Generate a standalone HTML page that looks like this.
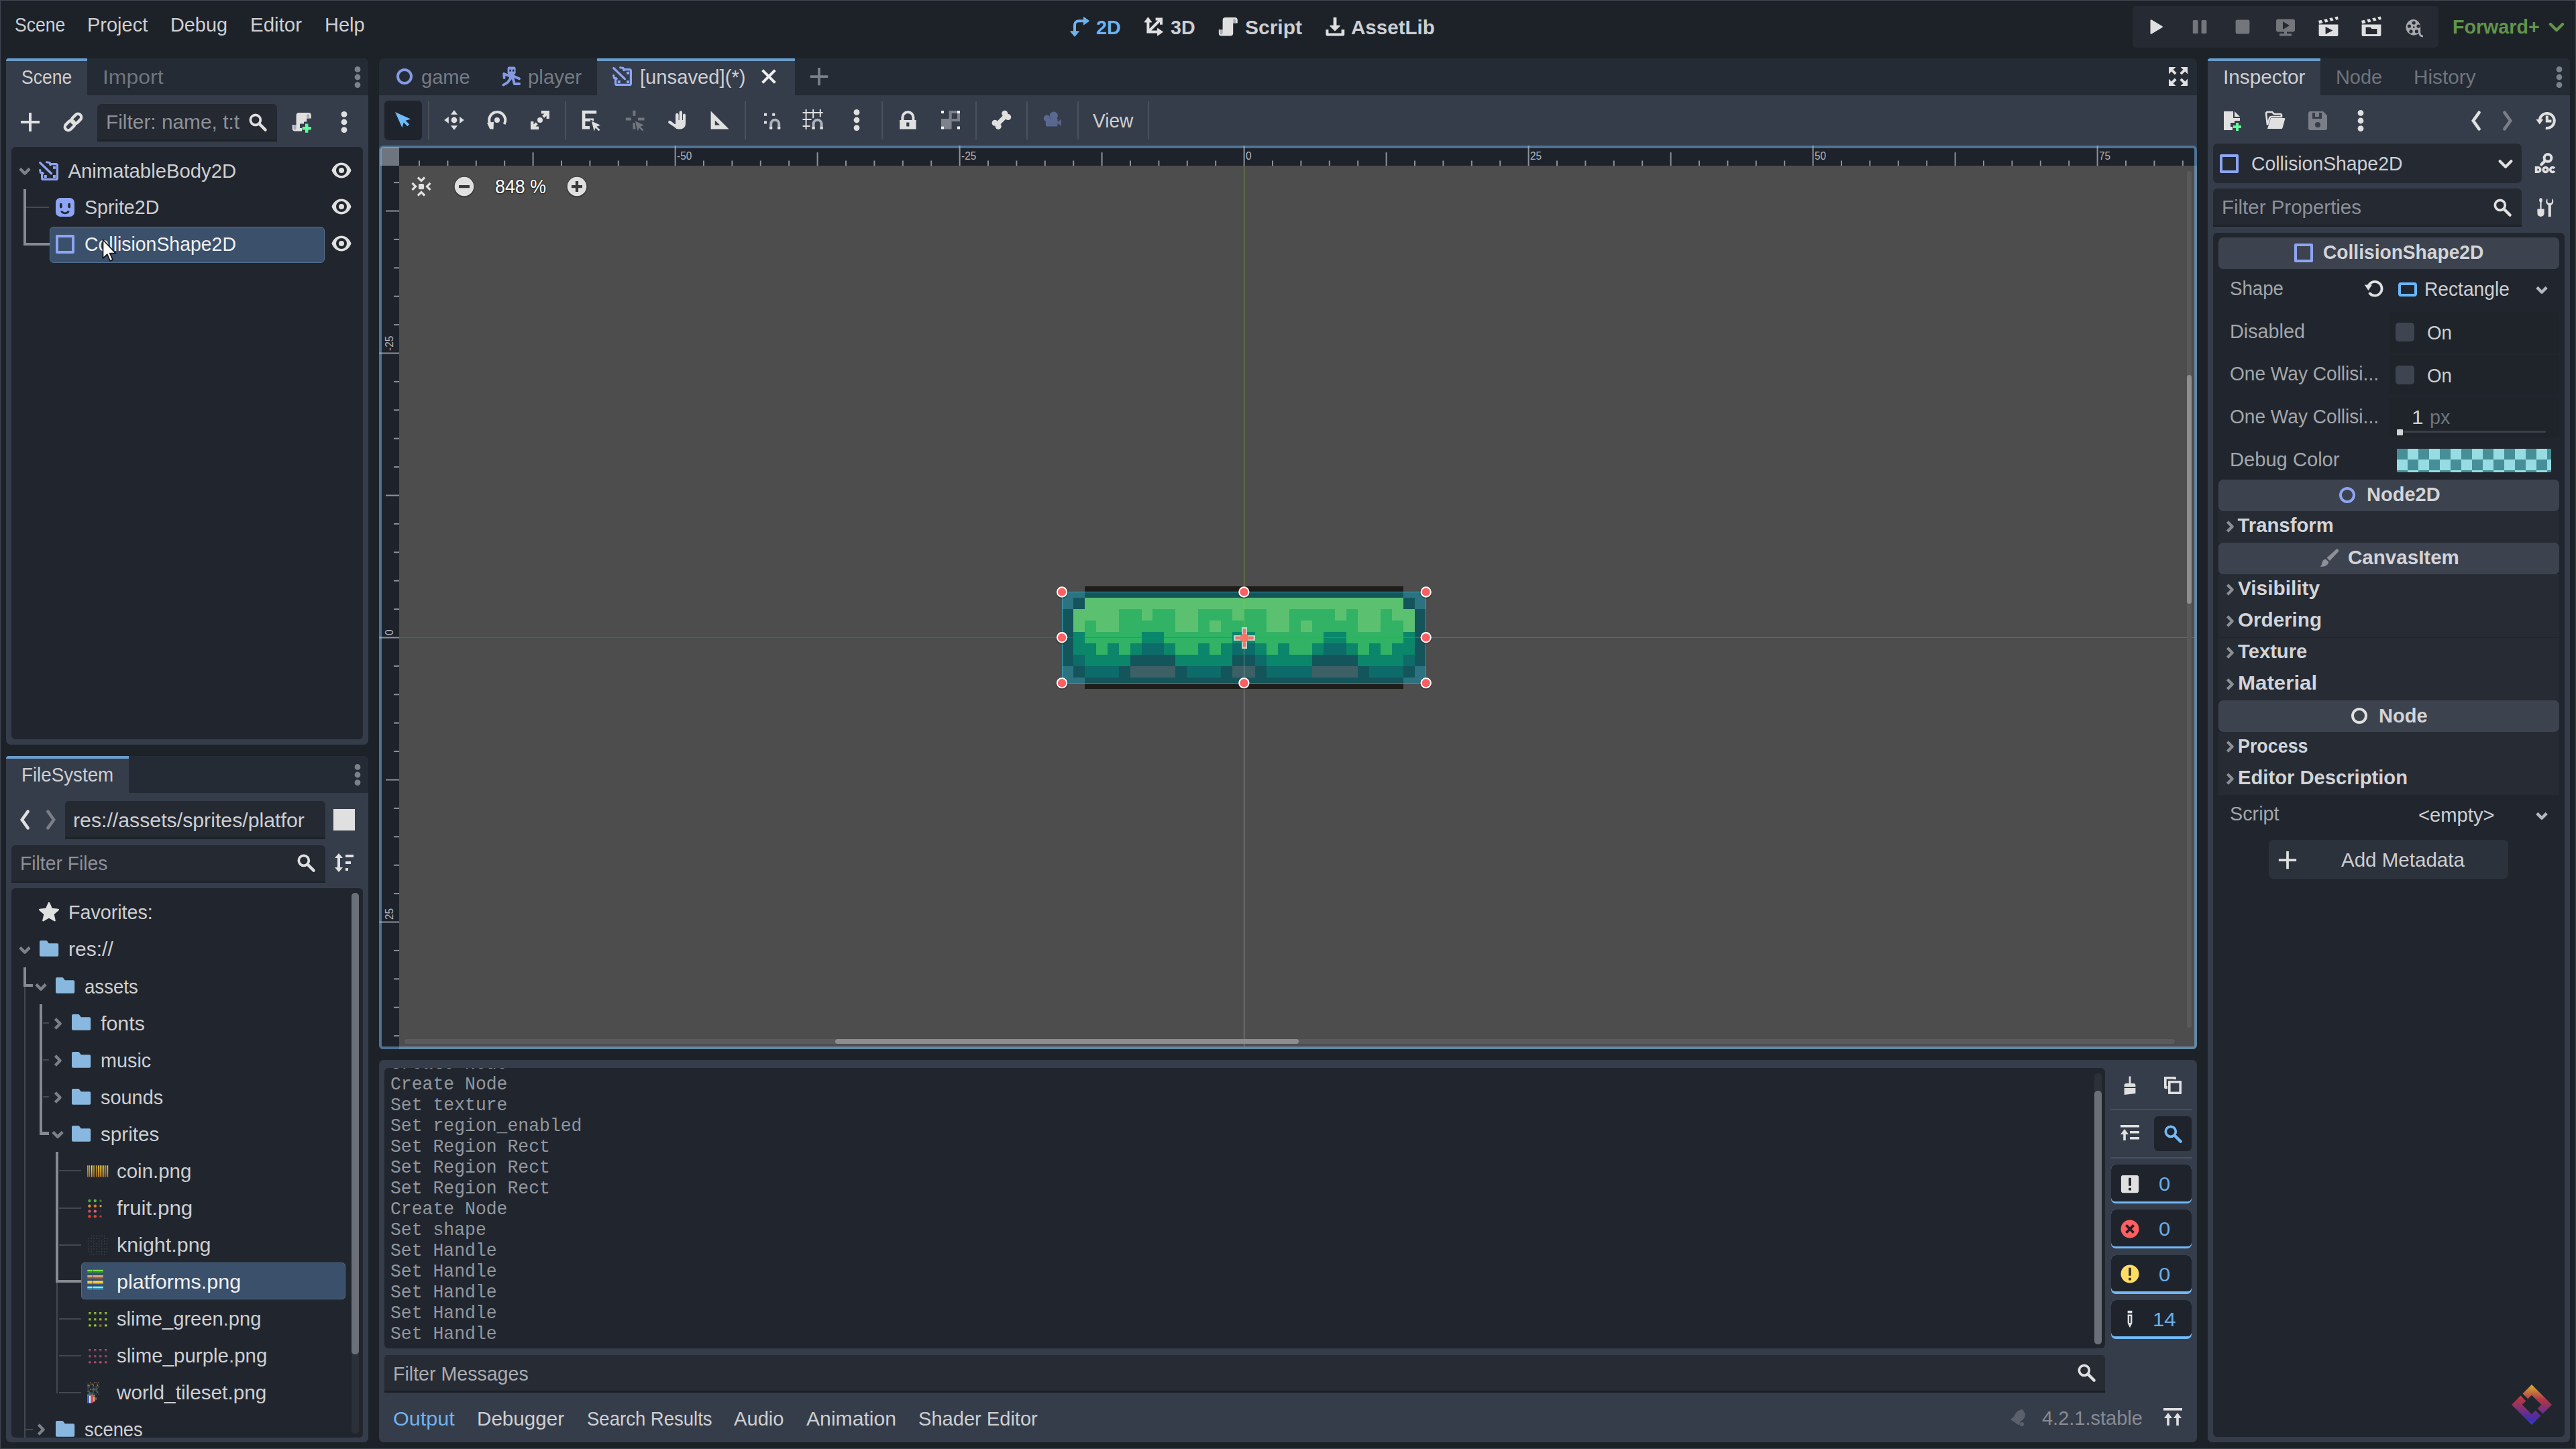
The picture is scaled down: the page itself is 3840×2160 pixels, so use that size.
<!DOCTYPE html>
<html><head><meta charset="utf-8"><title>Godot Engine</title>
<style>
*{box-sizing:border-box;margin:0;padding:0}
html,body{width:3840px;height:2160px;overflow:hidden;background:#1d2229}
body{position:relative;font-family:"Liberation Sans",sans-serif;color:#cdcfd2}
div,svg,span{position:absolute;display:block}
span{white-space:pre;line-height:1;transform-origin:0 0}
.m{font-family:"Liberation Mono",monospace}
</style></head>
<body>
<div style="left:0px;top:0px;width:3840px;height:1.3px;background:#3f4650;"></div>
<span style="left:21.6px;top:21.8px;font-size:29.3px;color:#cdcfd2;transform:scaleX(0.9064);">Scene</span>
<span style="left:130.4px;top:21.8px;font-size:29.3px;color:#cdcfd2;transform:scaleX(0.9892);">Project</span>
<span style="left:254px;top:21.8px;font-size:29.3px;color:#cdcfd2;transform:scaleX(0.9844);">Debug</span>
<span style="left:372.7px;top:21.8px;font-size:29.3px;color:#cdcfd2;transform:scaleX(1.0072);">Editor</span>
<span style="left:483.7px;top:21.8px;font-size:29.3px;color:#cdcfd2;transform:scaleX(0.9906);">Help</span>
<svg style="left:1592.5px;top:24.3px;width:32px;height:32px;" viewBox="0 0 16 16"><path d="M4.500 12.500V6.600a3 3 0 0 1 3-3H12" fill="none" stroke="#6eb2ee" stroke-width="2"/><path d="M1.300 11.400h6.400l-3.200 3.800zM11.200 .7v5.800l4.100-2.900z" fill="#6eb2ee" stroke="#6eb2ee" stroke-width=".5" stroke-linejoin="round"/></svg>
<span style="left:1634px;top:25.9px;font-size:29.3px;color:#6eb2ee;font-weight:700;transform:scaleX(0.9826);">2D</span>
<svg style="left:1703.2px;top:24.3px;width:32px;height:32px;" viewBox="0 0 16 16"><path d="M4.200 3.500v8.300h8M4.200 11.800L13 3" fill="none" stroke="#e0e0e0" stroke-width="2"/><path d="M9.800 2.200h4.200v4.200" fill="none" stroke="#e0e0e0" stroke-width="2" stroke-linejoin="miter"/><path d="M1.500 4.500h5.400L4.200 .9zM11.300 9.100v5.400l3.900-2.700z" fill="#e0e0e0" stroke="#e0e0e0" stroke-width=".5" stroke-linejoin="round"/></svg>
<span style="left:1744.9px;top:25.9px;font-size:29.3px;color:#cdcfd2;font-weight:700;transform:scaleX(0.9772);">3D</span>
<svg style="left:1814.3px;top:24.3px;width:32px;height:32px;" viewBox="0 0 16 16"><path d="M6.300 1.050a2 2 0 0 0-2 2V10H1.400v2.700a2 2 0 0 0 2 2h6.700a2 2 0 0 0 2-2V5.300h3.300V3.050a2 2 0 0 0-2-2z" fill="#e0e0e0"/><path d="M12.100 5.300V3.050a1 1 0 0 1 2 0V5.300zM4.300 10v2.700a1 1 0 0 1-2 0V10z" fill="#a9adb3"/></svg>
<span style="left:1856px;top:25.9px;font-size:29.3px;color:#cdcfd2;font-weight:700;transform:scaleX(1.0237);">Script</span>
<svg style="left:1973.7px;top:24.3px;width:32px;height:32px;" viewBox="0 0 16 16"><path d="M6.800 1.050h2.400v5.800h2.600v.6L8 11.300 4.200 7.450v-.6h2.600z" fill="#e0e0e0"/><path d="M1.200 10h2v2.700h9.600V10h2.300v3.700a1 1 0 0 1-1 1H2.200a1 1 0 0 1-1-1z" fill="#e0e0e0"/></svg>
<span style="left:2014.4px;top:25.9px;font-size:29.3px;color:#cdcfd2;font-weight:700;transform:scaleX(1.0094);">AssetLib</span>
<div style="left:3179px;top:9.1px;width:455.8px;height:61.6px;background:#252a33;border-radius:6px;"></div>
<svg style="left:3197.6px;top:24.3px;width:32px;height:32px;" viewBox="0 0 16 16"><path d="M4.400 3.300v9.400l7.900-4.700z" fill="#e0e0e0" stroke="#e0e0e0" stroke-width="1.300" stroke-linejoin="round"/></svg>
<svg style="left:3262.8px;top:24.1px;width:32px;height:32px;opacity:0.42;" viewBox="0 0 16 16"><rect x="2.900" y="2.950" width="3.900" height="10.100" rx=".8" fill="#e0e0e0"/><rect x="9.300" y="2.950" width="3.900" height="10.100" rx=".8" fill="#e0e0e0"/></svg>
<svg style="left:3327px;top:24.1px;width:32px;height:32px;opacity:0.42;" viewBox="0 0 16 16"><rect x="2.800" y="2.800" width="10.400" height="10.400" rx="1.200" fill="#e0e0e0"/></svg>
<svg style="left:3390.6px;top:24.6px;width:32px;height:32px;opacity:0.42;" viewBox="0 0 16 16"><path fill-rule="evenodd" d="M2.500 1.700a1.500 1.500 0 0 0-1.500 1.500v6.600a1.500 1.500 0 0 0 1.500 1.500H7v1.200H3.500v1.700h9v-1.700H9v-1.200h4.500a1.500 1.500 0 0 0 1.500-1.500V3.200a1.500 1.500 0 0 0-1.500-1.500zM6 3.500l5 3-5 3z" fill="#e0e0e0"/></svg>
<svg style="left:3454.7px;top:24.3px;width:32px;height:32px;" viewBox="0 0 16 16"><path fill-rule="evenodd" d="M.8 6.300h14.400V14a1 1 0 0 1-1 1H1.800a1 1 0 0 1-1-1zM5.800 7.900v5.600l5.400-2.800z" fill="#e0e0e0"/><path d="M.6 3.400l2.200-.5 1 2.200-2.800.6zM4.600 2.500l2.200-.5 1 2.200-2.200.5zM8.600 1.600l2.200-.5 1 2.200-2.200.5zM12.600 .7l2.300-.5.500 2.300-1.800.4z" fill="#e0e0e0"/></svg>
<svg style="left:3518.9px;top:24.3px;width:32px;height:32px;" viewBox="0 0 16 16"><path fill-rule="evenodd" d="M.8 6.300h14.400V14a1 1 0 0 1-1 1H1.800a1 1 0 0 1-1-1zM3.800 8.300v5.200h8.400V9.500H8.300l-1-1.200z" fill="#e0e0e0"/><path d="M.6 3.400l2.200-.5 1 2.200-2.800.6zM4.600 2.500l2.200-.5 1 2.200-2.200.5zM8.600 1.600l2.200-.5 1 2.200-2.200.5zM12.600 .7l2.300-.5.500 2.300-1.800.4z" fill="#e0e0e0"/></svg>
<svg style="left:3583.3px;top:24.8px;width:32px;height:32px;opacity:0.7;" viewBox="0 0 16 16"><path fill-rule="evenodd" d="M7.600 1.900a5.900 5.900 0 1 0 3.600 10.600c.3 1.600 1.300 2.700 3.300 2.700v-1.300c-1.300 0-1.900-.9-1.900-2.600v-3.500a5.900 5.900 0 0 0-5-5.900zM7.600 3.200a1.300 1.300 0 0 1 0 2.600 1.300 1.300 0 0 1 0-2.600zM4.200 5.700a1.300 1.300 0 0 1 0 2.600 1.300 1.300 0 0 1 0-2.600zm6.800 0a1.300 1.300 0 0 1 0 2.600 1.300 1.300 0 0 1 0-2.600zM5.500 9.600a1.300 1.300 0 0 1 0 2.600 1.300 1.300 0 0 1 0-2.600zm4.200 0a1.300 1.300 0 0 1 0 2.600 1.300 1.300 0 0 1 0-2.600zM7.600 7.100a.7.700 0 0 1 0 1.400.7.700 0 0 1 0-1.400z" fill="#e0e0e0"/></svg>
<span style="left:3656.3px;top:25.1px;font-size:29.3px;color:#62944a;font-weight:700;transform:scaleX(0.9767);">Forward+</span>
<svg style="left:3795.2px;top:24.2px;width:32px;height:32px;" viewBox="0 0 16 16"><path d="M3.500 6l4.500 4.500L12.500 6" fill="none" stroke="#62944a" stroke-width="2.200" stroke-linecap="round" stroke-linejoin="round"/></svg>
<div style="left:9px;top:87.2px;width:540px;height:1023.3px;background:#363d4a;border-radius:7px;"></div>
<div style="left:9px;top:87.2px;width:540px;height:54.5px;background:#252b34;border-radius:7px 7px 0 0;"></div>
<div style="left:9px;top:87.2px;width:121px;height:54.5px;background:#363d4a;border-radius:4px 0 0 0;"></div>
<div style="left:9px;top:87.2px;width:121px;height:4px;background:#6a9ccb;border-radius:4px 0 0 0;"></div>
<span style="left:32px;top:99.5px;font-size:29.3px;color:#cdcfd2;transform:scaleX(0.9052);">Scene</span>
<span style="left:152.5px;top:99.5px;font-size:29.3px;color:#6f757f;transform:scaleX(1.09);">Import</span>
<svg style="left:517px;top:98.5px;width:32px;height:32px;" viewBox="0 0 16 16"><circle cx="8" cy="2.200" r="2.200" fill="#7c818c"/><circle cx="8" cy="8" r="2.200" fill="#7c818c"/><circle cx="8" cy="13.800" r="2.200" fill="#7c818c"/></svg>
<svg style="left:28.7px;top:165.9px;width:32px;height:32px;" viewBox="0 0 16 16"><path d="M7 1v6H1v2h6v6h2V9h6V7H9V1z" fill="#e0e0e0"/></svg>
<svg style="left:92.5px;top:165.9px;width:32px;height:32px;" viewBox="0 0 16 16"><g fill="none" stroke="#e0e0e0" stroke-width="2.200" transform="rotate(-45 8 8)"><rect x="0.4" y="5.500" width="8.200" height="5" rx="2.500"/><rect x="7.400" y="5.500" width="8.200" height="5" rx="2.500"/></g></svg>
<div style="left:145.3px;top:154.7px;width:267.3px;height:55.9px;background:#242932;border-radius:6px 6px 0 0;border-bottom:3px solid #1e222a;"></div>
<span style="left:158px;top:167.3px;font-size:29.3px;color:#8d9199;transform:scaleX(1.0186);">Filter: name, t:t</span>
<svg style="left:368.9px;top:166.9px;width:30px;height:30px;" viewBox="0 0 16 16"><circle cx="6.3" cy="6.3" r="4" fill="none" stroke="#e0e0e0" stroke-width="2"/><path d="M9.4 9.4l4.8 4.8" stroke="#e0e0e0" stroke-width="2.3" stroke-linecap="round"/></svg>
<svg style="left:433px;top:165.9px;width:32px;height:32px;" viewBox="0 0 16 16"><path d="M6.300 1.050a2 2 0 0 0-2 2V10H1.400v2.700a2 2 0 0 0 2 2h5.100v-2.200H7v-3.200h3V7.800h2.100V5.300h3.300V3.050a2 2 0 0 0-2-2z" fill="#e0e0e0"/><path d="M12.100 5.300V3.050a1 1 0 0 1 2 0V5.300zM4.300 10v2.700a1 1 0 0 1-2 0V10z" fill="#a9adb3"/><path d="M11 9.300h2.200v2.200h2.200v2.200h-2.200v2.200H11v-2.200H8.800v-2.200H11z" fill="#5fff97"/></svg>
<svg style="left:496.8px;top:165.9px;width:32px;height:32px;" viewBox="0 0 16 16"><circle cx="8" cy="2.200" r="2.200" fill="#e0e0e0"/><circle cx="8" cy="8" r="2.200" fill="#e0e0e0"/><circle cx="8" cy="13.800" r="2.200" fill="#e0e0e0"/></svg>
<div style="left:17px;top:219px;width:523.8px;height:883px;background:#21262e;border-radius:6px;"></div>
<div style="left:34.9px;top:282px;width:4.2px;height:84px;background:#868b91;"></div>
<div style="left:34.9px;top:361.6px;width:38.8px;height:4.2px;background:#868b91;"></div>
<div style="left:39px;top:308px;width:34px;height:2px;background:#434952;"></div>
<div style="left:73.7px;top:337.7px;width:410.8px;height:54px;background:#3a506b;border-radius:6px;border:1.5px solid #54708f;"></div>
<svg style="left:21.2px;top:239.2px;width:32px;height:32px;" viewBox="0 0 16 16"><path d="M4.400 6.200L8 9.800l3.600-3.600" fill="none" stroke="#7c8189" stroke-width="2.200" stroke-linejoin="round"/></svg>
<svg style="left:57.4px;top:239px;width:32px;height:32px;" viewBox="0 0 16 16"><path fill="none" stroke="#8da5f3" stroke-width="1.600" stroke-linejoin="round" d="M8 2.800h5.200a1 1 0 0 1 1 1v9.400a1 1 0 0 1-1 1H3.800a1 1 0 0 1-1-1V8.500"/><path fill="none" stroke="#8da5f3" stroke-width="1.700" stroke-linecap="round" d="M1.400 1.800l8.300 8"/><path fill="none" stroke="#8da5f3" stroke-width="1.500" stroke-linecap="round" stroke-linejoin="round" d="M6.300 1.400l2.300 .4.500 1.600M1.300 7.200l.4 2 2 .5"/><rect x="11" y="4.400" width="2" height="2" fill="#8da5f3"/><rect x="4.400" y="11" width="2" height="2" fill="#8da5f3"/><rect x="11" y="11" width="2" height="2" fill="#8da5f3"/></svg>
<span style="left:101.4px;top:240.3px;font-size:29.3px;color:#cdcfd2;">AnimatableBody2D</span>
<svg style="left:492.8px;top:237.7px;width:32px;height:32px;" viewBox="0 0 16 16"><path fill-rule="evenodd" d="M8 2.3C5 2.3 2.4 4.2.9 7.5a1.2 1.2 0 0 0 0 1C2.4 11.8 5 13.7 8 13.7s5.6-1.9 7.1-5.2a1.2 1.2 0 0 0 0-1C13.6 4.200 11 2.3 8 2.300zM8 4a4 4 0 0 1 0 8 4 4 0 0 1 0-8zm0 2a2 2 0 0 0 0 4 2 2 0 0 0 0-4z" fill="#e0e0e0"/></svg>
<svg style="left:80.5px;top:293.3px;width:32px;height:32px;" viewBox="0 0 16 16"><path fill-rule="evenodd" fill="#8da5f3" d="M4.500 1A3.500 3.500 0 0 0 1 4.500v7A3.500 3.500 0 0 0 4.500 15h7a3.500 3.500 0 0 0 3.500-3.500v-7A3.500 3.500 0 0 0 11.500 1zM4 5.800a.9.900 0 0 1 1.800 0v2a.9.900 0 0 1-1.800 0zM10.200 5.800a.9.900 0 0 1 1.800 0v2a.9.900 0 0 1-1.800 0zM4.600 10.800h1.700a1.800 1.500 0 0 0 3.400 0h1.700a3.500 3 0 0 1-6.800 0z"/></svg>
<span style="left:125.6px;top:294.2px;font-size:29.3px;color:#cdcfd2;transform:scaleX(0.9773);">Sprite2D</span>
<svg style="left:492.8px;top:292.4px;width:32px;height:32px;" viewBox="0 0 16 16"><path fill-rule="evenodd" d="M8 2.3C5 2.3 2.4 4.2.9 7.5a1.2 1.2 0 0 0 0 1C2.4 11.8 5 13.7 8 13.7s5.6-1.9 7.1-5.2a1.2 1.2 0 0 0 0-1C13.6 4.200 11 2.3 8 2.300zM8 4a4 4 0 0 1 0 8 4 4 0 0 1 0-8zm0 2a2 2 0 0 0 0 4 2 2 0 0 0 0-4z" fill="#e0e0e0"/></svg>
<svg style="left:80.5px;top:348.1px;width:32px;height:32px;" viewBox="0 0 16 16"><rect x="2" y="2" width="12" height="12" fill="none" stroke="#8da5f3" stroke-width="2" stroke-linejoin="round"/></svg>
<span style="left:125.6px;top:349.4px;font-size:29.3px;color:#f0f0f0;transform:scaleX(0.97);">CollisionShape2D</span>
<svg style="left:492.8px;top:347.2px;width:32px;height:32px;" viewBox="0 0 16 16"><path fill-rule="evenodd" d="M8 2.3C5 2.3 2.4 4.2.9 7.5a1.2 1.2 0 0 0 0 1C2.4 11.8 5 13.7 8 13.7s5.6-1.9 7.1-5.2a1.2 1.2 0 0 0 0-1C13.6 4.200 11 2.3 8 2.300zM8 4a4 4 0 0 1 0 8 4 4 0 0 1 0-8zm0 2a2 2 0 0 0 0 4 2 2 0 0 0 0-4z" fill="#e0e0e0"/></svg>
<div style="left:9px;top:1127.3px;width:540px;height:1023.1px;background:#363d4a;border-radius:7px;"></div>
<div style="left:9px;top:1127.3px;width:540px;height:54.5px;background:#252b34;border-radius:7px 7px 0 0;"></div>
<div style="left:9px;top:1127.3px;width:183px;height:54.5px;background:#363d4a;border-radius:4px 0 0 0;"></div>
<div style="left:9px;top:1127.3px;width:183px;height:4px;background:#6a9ccb;border-radius:4px 0 0 0;"></div>
<span style="left:32px;top:1139.6px;font-size:29.3px;color:#cdcfd2;transform:scaleX(0.9469);">FileSystem</span>
<svg style="left:517px;top:1138.5px;width:32px;height:32px;" viewBox="0 0 16 16"><circle cx="8" cy="2.200" r="2.200" fill="#7c818c"/><circle cx="8" cy="8" r="2.200" fill="#7c818c"/><circle cx="8" cy="13.800" r="2.200" fill="#7c818c"/></svg>
<svg style="left:21.3px;top:1206px;width:32px;height:32px;" viewBox="0 0 16 16"><path d="M10.300 1.800L5.900 8l4.400 6.200" fill="none" stroke="#e0e0e0" stroke-width="2.300" stroke-linejoin="miter" stroke-linecap="round"/></svg>
<svg style="left:60.4px;top:1206px;width:32px;height:32px;opacity:0.4;" viewBox="0 0 16 16"><path d="M5.700 1.800L10.100 8l-4.400 6.200" fill="none" stroke="#e0e0e0" stroke-width="2.300" stroke-linejoin="miter" stroke-linecap="round"/></svg>
<div style="left:96.9px;top:1194.4px;width:388px;height:56.3px;background:#242932;border-radius:6px 6px 0 0;border-bottom:3px solid #1e222a;"></div>
<span style="left:109.2px;top:1207.8px;font-size:29.3px;color:#cdcfd2;transform:scaleX(1.033);">res://assets/sprites/platfor</span>
<div style="left:496.8px;top:1206px;width:32.5px;height:32px;background:#e0e0e0;"></div>
<div style="left:17.1px;top:1259.6px;width:467.8px;height:56px;background:#242932;border-radius:6px 6px 0 0;border-bottom:3px solid #1e222a;"></div>
<span style="left:29.8px;top:1272.3px;font-size:29.3px;color:#8d9199;transform:scaleX(0.9659);">Filter Files</span>
<svg style="left:441.2px;top:1271px;width:30px;height:30px;" viewBox="0 0 16 16"><circle cx="6.3" cy="6.3" r="4" fill="none" stroke="#e0e0e0" stroke-width="2"/><path d="M9.4 9.4l4.8 4.8" stroke="#e0e0e0" stroke-width="2.3" stroke-linecap="round"/></svg>
<svg style="left:496.9px;top:1270px;width:32px;height:32px;" viewBox="0 0 16 16"><path d="M4 1L1 4.500h2v7H1L4 15l3-3.500H5v-7h2z" fill="#e0e0e0"/><path d="M9 2h6v2H9zM9 7h4v2H9zM9 12h2v2H9z" fill="#e0e0e0"/></svg>
<div style="left:17.1px;top:1324px;width:523.7px;height:818.5px;background:#21262e;border-radius:6px;overflow:hidden;"></div>
<div style="left:523.7px;top:1330.5px;width:11.1px;height:806.5px;background:#2b3039;border-radius:5px;"></div>
<div style="left:523.7px;top:1330.5px;width:11.1px;height:688.3px;background:#6a6f78;border-radius:5px;"></div>
<div style="left:36.3px;top:1471px;width:1.7px;height:671.5px;background:#434952;"></div>
<div style="left:34.9px;top:1442.3px;width:4.2px;height:28px;background:#868b91;"></div>
<div style="left:34.9px;top:1466.5px;width:14.2px;height:4.5px;background:#868b91;"></div>
<div style="left:59px;top:1497.3px;width:4.2px;height:194px;background:#868b91;"></div>
<div style="left:59px;top:1687px;width:14px;height:4.6px;background:#868b91;"></div>
<div style="left:63.6px;top:1524.25px;width:9.4px;height:2px;background:#434952;"></div>
<div style="left:63.6px;top:1579.3px;width:9.4px;height:2px;background:#434952;"></div>
<div style="left:63.6px;top:1634.35px;width:9.4px;height:2px;background:#434952;"></div>
<div style="left:82.9px;top:1717.2px;width:4.2px;height:194.5px;background:#868b91;"></div>
<div style="left:82.9px;top:1907.6px;width:38.4px;height:4.6px;background:#868b91;"></div>
<div style="left:84.2px;top:1912px;width:1.7px;height:164.5px;background:#434952;"></div>
<div style="left:88px;top:1744.45px;width:33px;height:2px;background:#434952;"></div>
<div style="left:88px;top:1799.5px;width:33px;height:2px;background:#434952;"></div>
<div style="left:88px;top:1854.55px;width:33px;height:2px;background:#434952;"></div>
<div style="left:88px;top:1964.65px;width:33px;height:2px;background:#434952;"></div>
<div style="left:88px;top:2019.7px;width:33px;height:2px;background:#434952;"></div>
<div style="left:88px;top:2074.75px;width:33px;height:2px;background:#434952;"></div>
<div style="left:38px;top:2129.8px;width:11px;height:2px;background:#434952;"></div>
<div style="left:121.1px;top:1882.4px;width:393.6px;height:54.4px;background:#3a506b;border-radius:5px;border:1.5px solid #4f6b8c;"></div>
<svg style="left:57px;top:1343.3px;width:32px;height:32px;" viewBox="0 0 16 16"><path d="M8 1.500l2 4.500 4.900.5-3.700 3.300 1.100 4.800L8 12.100l-4.300 2.500 1.100-4.800-3.700-3.300 4.900-.5z" fill="#e0e0e0" stroke="#e0e0e0" stroke-width="1.200" stroke-linejoin="round"/></svg>
<span style="left:101.7px;top:1345.4px;font-size:29.3px;color:#cdcfd2;transform:scaleX(0.9773);">Favorites:</span>
<svg style="left:21.3px;top:1399.65px;width:32px;height:32px;" viewBox="0 0 16 16"><path d="M4.400 6.200L8 9.800l3.600-3.600" fill="none" stroke="#7c8189" stroke-width="2.200" stroke-linejoin="round"/></svg>
<svg style="left:57px;top:1399.35px;width:32px;height:32px;" viewBox="0 0 16 16"><path d="M2 1.450a1 1 0 0 0-1 1V12.400a1 1 0 0 0 1 1h12.100a1 1 0 0 0 1-1V4.600a1 1 0 0 0-1-1H7.900L6.600 1.900a1 1 0 0 0-.8-.450z" fill="#88b8e0"/></svg>
<span style="left:101.7px;top:1400.45px;font-size:29.3px;color:#cdcfd2;transform:scaleX(1.0257);">res://</span>
<svg style="left:44.8px;top:1454.7px;width:32px;height:32px;" viewBox="0 0 16 16"><path d="M4.400 6.200L8 9.800l3.600-3.600" fill="none" stroke="#7c8189" stroke-width="2.200" stroke-linejoin="round"/></svg>
<svg style="left:80.9px;top:1454.4px;width:32px;height:32px;" viewBox="0 0 16 16"><path d="M2 1.450a1 1 0 0 0-1 1V12.400a1 1 0 0 0 1 1h12.100a1 1 0 0 0 1-1V4.600a1 1 0 0 0-1-1H7.900L6.600 1.900a1 1 0 0 0-.8-.450z" fill="#88b8e0"/></svg>
<span style="left:125.6px;top:1455.5px;font-size:29.3px;color:#cdcfd2;transform:scaleX(0.9423);">assets</span>
<svg style="left:69.7px;top:1509.75px;width:32px;height:32px;" viewBox="0 0 16 16"><path d="M6.200 4.400L9.800 8l-3.600 3.600" fill="none" stroke="#7c8189" stroke-width="2.200" stroke-linejoin="round"/></svg>
<svg style="left:104.8px;top:1509.45px;width:32px;height:32px;" viewBox="0 0 16 16"><path d="M2 1.450a1 1 0 0 0-1 1V12.400a1 1 0 0 0 1 1h12.100a1 1 0 0 0 1-1V4.600a1 1 0 0 0-1-1H7.900L6.600 1.900a1 1 0 0 0-.8-.450z" fill="#88b8e0"/></svg>
<span style="left:149.5px;top:1510.55px;font-size:29.3px;color:#cdcfd2;transform:scaleX(1.0375);">fonts</span>
<svg style="left:69.7px;top:1564.8px;width:32px;height:32px;" viewBox="0 0 16 16"><path d="M6.200 4.400L9.800 8l-3.600 3.600" fill="none" stroke="#7c8189" stroke-width="2.200" stroke-linejoin="round"/></svg>
<svg style="left:104.8px;top:1564.5px;width:32px;height:32px;" viewBox="0 0 16 16"><path d="M2 1.450a1 1 0 0 0-1 1V12.400a1 1 0 0 0 1 1h12.100a1 1 0 0 0 1-1V4.600a1 1 0 0 0-1-1H7.900L6.600 1.900a1 1 0 0 0-.8-.450z" fill="#88b8e0"/></svg>
<span style="left:149.5px;top:1565.6px;font-size:29.3px;color:#cdcfd2;transform:scaleX(0.9828);">music</span>
<svg style="left:69.7px;top:1619.85px;width:32px;height:32px;" viewBox="0 0 16 16"><path d="M6.200 4.400L9.800 8l-3.600 3.600" fill="none" stroke="#7c8189" stroke-width="2.200" stroke-linejoin="round"/></svg>
<svg style="left:104.8px;top:1619.55px;width:32px;height:32px;" viewBox="0 0 16 16"><path d="M2 1.450a1 1 0 0 0-1 1V12.400a1 1 0 0 0 1 1h12.100a1 1 0 0 0 1-1V4.600a1 1 0 0 0-1-1H7.900L6.600 1.900a1 1 0 0 0-.8-.450z" fill="#88b8e0"/></svg>
<span style="left:149.5px;top:1620.65px;font-size:29.3px;color:#cdcfd2;transform:scaleX(0.9864);">sounds</span>
<svg style="left:69.7px;top:1674.9px;width:32px;height:32px;" viewBox="0 0 16 16"><path d="M4.400 6.200L8 9.800l3.600-3.600" fill="none" stroke="#7c8189" stroke-width="2.200" stroke-linejoin="round"/></svg>
<svg style="left:104.8px;top:1674.6px;width:32px;height:32px;" viewBox="0 0 16 16"><path d="M2 1.450a1 1 0 0 0-1 1V12.400a1 1 0 0 0 1 1h12.100a1 1 0 0 0 1-1V4.600a1 1 0 0 0-1-1H7.900L6.600 1.900a1 1 0 0 0-.8-.450z" fill="#88b8e0"/></svg>
<span style="left:149.5px;top:1675.7px;font-size:29.3px;color:#cdcfd2;transform:scaleX(1.0105);">sprites</span>
<span style="left:173.7px;top:1730.75px;font-size:29.3px;color:#cdcfd2;transform:scaleX(1.0057);">coin.png</span>
<span style="left:173.7px;top:1785.8px;font-size:29.3px;color:#cdcfd2;transform:scaleX(1.0703);">fruit.png</span>
<span style="left:173.7px;top:1840.85px;font-size:29.3px;color:#cdcfd2;transform:scaleX(1.0392);">knight.png</span>
<span style="left:173.7px;top:1895.9px;font-size:29.3px;color:#f0f0f0;transform:scaleX(1.0434);">platforms.png</span>
<span style="left:173.7px;top:1950.95px;font-size:29.3px;color:#cdcfd2;transform:scaleX(0.9944);">slime_green.png</span>
<span style="left:173.7px;top:2006px;font-size:29.3px;color:#cdcfd2;transform:scaleX(1.0053);">slime_purple.png</span>
<span style="left:173.7px;top:2061.05px;font-size:29.3px;color:#cdcfd2;transform:scaleX(1.0156);">world_tileset.png</span>
<svg style="left:44.8px;top:2115.3px;width:32px;height:32px;" viewBox="0 0 16 16"><path d="M6.200 4.400L9.800 8l-3.600 3.600" fill="none" stroke="#7c8189" stroke-width="2.200" stroke-linejoin="round"/></svg>
<svg style="left:80.9px;top:2115px;width:32px;height:32px;" viewBox="0 0 16 16"><path d="M2 1.450a1 1 0 0 0-1 1V12.400a1 1 0 0 0 1 1h12.100a1 1 0 0 0 1-1V4.600a1 1 0 0 0-1-1H7.900L6.600 1.900a1 1 0 0 0-.8-.450z" fill="#88b8e0"/></svg>
<span style="left:125.6px;top:2116.1px;font-size:29.3px;color:#cdcfd2;transform:scaleX(0.9351);">scenes</span>
<svg style="left:129.7px;top:1729.65px;width:32px;height:32px;" viewBox="0 0 32 32"><defs><linearGradient id="cg" x1="0" y1="0" x2="0" y2="1"><stop offset="0" stop-color="#ffe14f"/><stop offset=".5" stop-color="#f4b630"/><stop offset="1" stop-color="#c98524"/></linearGradient></defs><rect x="0.3" y="7.3" width="1" height="17.4" fill="url(#cg)"/><rect x="2.4" y="7.3" width="1.3" height="17.4" fill="url(#cg)"/><rect x="5.6" y="7.3" width="1.6" height="17.4" fill="url(#cg)"/><rect x="8.2" y="7.3" width="1.3" height="17.4" fill="url(#cg)"/><rect x="10.9" y="7.3" width="1.1" height="17.4" fill="url(#cg)"/><rect x="13.5" y="7.3" width="1.3" height="17.4" fill="url(#cg)"/><rect x="16.2" y="7.3" width="1.6" height="17.4" fill="url(#cg)"/><rect x="18.8" y="7.3" width="1.3" height="17.4" fill="url(#cg)"/><rect x="21.5" y="7.3" width="1.1" height="17.4" fill="url(#cg)"/><rect x="24.1" y="7.3" width="1.3" height="17.4" fill="url(#cg)"/><rect x="27.3" y="7.3" width="1" height="17.4" fill="url(#cg)"/><rect x="29.9" y="7.3" width="1.3" height="17.4" fill="url(#cg)"/></svg>
<svg style="left:129.7px;top:1784.7px;width:32px;height:32px;" viewBox="0 0 32 32"><circle cx="3.4" cy="5" r="2.2" fill="#4fa83a"/><circle cx="11.8" cy="5" r="2.2" fill="#5cb848"/><circle cx="20" cy="5" r="1.7" fill="#3f8a33"/><circle cx="3.4" cy="12.8" r="2.2" fill="#e88a2a"/><circle cx="11.8" cy="12.8" r="2.2" fill="#e07a28"/><circle cx="20" cy="12.8" r="1.7" fill="#c8a030"/><circle cx="3.4" cy="20.6" r="2.2" fill="#c8506a"/><circle cx="11.8" cy="20.6" r="2.2" fill="#d86070"/><circle cx="20" cy="20.6" r="1.7" fill="#3a3038"/><circle cx="3.4" cy="28.2" r="2.2" fill="#d8402a"/><circle cx="11.8" cy="28.2" r="2.2" fill="#d84838"/><circle cx="20" cy="28.2" r="1.7" fill="#b83a30"/></svg>
<svg style="left:129.7px;top:1839.75px;width:32px;height:32px;" viewBox="0 0 32 32"><rect x="5.4" y="1.5" width="1.4" height="1.6" fill="#4a4a52" fill-opacity=".75"/><rect x="9.3" y="1.5" width="1.4" height="1.6" fill="#4a4a52" fill-opacity=".75"/><rect x="13.2" y="1.5" width="1.4" height="1.6" fill="#4a4a52" fill-opacity=".75"/><rect x="17.1" y="1.5" width="1.4" height="1.6" fill="#4a4a52" fill-opacity=".75"/><rect x="21" y="1.5" width="1.4" height="1.6" fill="#4a4a52" fill-opacity=".75"/><rect x="24.9" y="1.5" width="1.4" height="1.6" fill="#4a4a52" fill-opacity=".75"/><rect x="1.5" y="5.4" width="1.4" height="1.6" fill="#4a4a52" fill-opacity=".75"/><rect x="5.4" y="5.4" width="1.4" height="1.6" fill="#4a4a52" fill-opacity=".75"/><rect x="9.3" y="5.4" width="1.4" height="1.6" fill="#4a4a52" fill-opacity=".75"/><rect x="13.2" y="5.4" width="1.4" height="1.6" fill="#4a4a52" fill-opacity=".75"/><rect x="17.1" y="5.4" width="1.4" height="1.6" fill="#4a4a52" fill-opacity=".75"/><rect x="24.9" y="5.4" width="1.4" height="1.6" fill="#4a4a52" fill-opacity=".75"/><rect x="28.8" y="5.4" width="1.4" height="1.6" fill="#4a4a52" fill-opacity=".75"/><rect x="1.5" y="9.3" width="1.4" height="1.6" fill="#4a4a52" fill-opacity=".75"/><rect x="5.4" y="9.3" width="1.4" height="1.6" fill="#4a4a52" fill-opacity=".75"/><rect x="9.3" y="9.3" width="1.4" height="1.6" fill="#4a4a52" fill-opacity=".75"/><rect x="17.1" y="9.3" width="1.4" height="1.6" fill="#4a4a52" fill-opacity=".75"/><rect x="21" y="9.3" width="1.4" height="1.6" fill="#4a4a52" fill-opacity=".75"/><rect x="24.9" y="9.3" width="1.4" height="1.6" fill="#4a4a52" fill-opacity=".75"/><rect x="28.8" y="9.3" width="1.4" height="1.6" fill="#4a4a52" fill-opacity=".75"/><rect x="1.5" y="13.2" width="1.4" height="1.6" fill="#4a4a52" fill-opacity=".75"/><rect x="9.3" y="13.2" width="1.4" height="1.6" fill="#4a4a52" fill-opacity=".75"/><rect x="13.2" y="13.2" width="1.4" height="1.6" fill="#4a4a52" fill-opacity=".75"/><rect x="17.1" y="13.2" width="1.4" height="1.6" fill="#4a4a52" fill-opacity=".75"/><rect x="21" y="13.2" width="1.4" height="1.6" fill="#4a4a52" fill-opacity=".75"/><rect x="24.9" y="13.2" width="1.4" height="1.6" fill="#4a4a52" fill-opacity=".75"/><rect x="28.8" y="13.2" width="1.4" height="1.6" fill="#4a4a52" fill-opacity=".75"/><rect x="1.5" y="17.1" width="1.4" height="1.6" fill="#4a4a52" fill-opacity=".75"/><rect x="5.4" y="17.1" width="1.4" height="1.6" fill="#4a4a52" fill-opacity=".75"/><rect x="9.3" y="17.1" width="1.4" height="1.6" fill="#4a4a52" fill-opacity=".75"/><rect x="13.2" y="17.1" width="1.4" height="1.6" fill="#4a4a52" fill-opacity=".75"/><rect x="17.1" y="17.1" width="1.4" height="1.6" fill="#4a4a52" fill-opacity=".75"/><rect x="21" y="17.1" width="1.4" height="1.6" fill="#4a4a52" fill-opacity=".75"/><rect x="28.8" y="17.1" width="1.4" height="1.6" fill="#4a4a52" fill-opacity=".75"/><rect x="1.5" y="21" width="1.4" height="1.6" fill="#4a4a52" fill-opacity=".75"/><rect x="5.4" y="21" width="1.4" height="1.6" fill="#4a4a52" fill-opacity=".75"/><rect x="9.3" y="21" width="1.4" height="1.6" fill="#4a4a52" fill-opacity=".75"/><rect x="13.2" y="21" width="1.4" height="1.6" fill="#4a4a52" fill-opacity=".75"/><rect x="21" y="21" width="1.4" height="1.6" fill="#4a4a52" fill-opacity=".75"/><rect x="24.9" y="21" width="1.4" height="1.6" fill="#4a4a52" fill-opacity=".75"/><rect x="28.8" y="21" width="1.4" height="1.6" fill="#4a4a52" fill-opacity=".75"/><rect x="1.5" y="24.9" width="1.4" height="1.6" fill="#4a4a52" fill-opacity=".75"/><rect x="5.4" y="24.9" width="1.4" height="1.6" fill="#4a4a52" fill-opacity=".75"/><rect x="13.2" y="24.9" width="1.4" height="1.6" fill="#4a4a52" fill-opacity=".75"/><rect x="17.1" y="24.9" width="1.4" height="1.6" fill="#4a4a52" fill-opacity=".75"/><rect x="21" y="24.9" width="1.4" height="1.6" fill="#4a4a52" fill-opacity=".75"/><rect x="24.9" y="24.9" width="1.4" height="1.6" fill="#4a4a52" fill-opacity=".75"/><rect x="28.8" y="24.9" width="1.4" height="1.6" fill="#4a4a52" fill-opacity=".75"/><rect x="5.4" y="28.8" width="1.4" height="1.6" fill="#4a4a52" fill-opacity=".75"/><rect x="9.3" y="28.8" width="1.4" height="1.6" fill="#4a4a52" fill-opacity=".75"/><rect x="13.2" y="28.8" width="1.4" height="1.6" fill="#4a4a52" fill-opacity=".75"/><rect x="17.1" y="28.8" width="1.4" height="1.6" fill="#4a4a52" fill-opacity=".75"/><rect x="21" y="28.8" width="1.4" height="1.6" fill="#4a4a52" fill-opacity=".75"/><rect x="24.9" y="28.8" width="1.4" height="1.6" fill="#4a4a52" fill-opacity=".75"/></svg>
<svg style="left:129.7px;top:1891.8px;width:32px;height:32px;" viewBox="0 0 32 32"><rect x="0.3" y="0.8" width="7.3" height="2.6" fill="#7fe04a"/><rect x="0.3" y="3.4" width="7.3" height="2.1" fill="#2f8f3f"/><rect x="8.6" y="0.8" width="15.2" height="2.6" fill="#7fe04a"/><rect x="8.600" y="3.4" width="15.2" height="2.1" fill="#2f8f3f"/><rect x="0.3" y="9.1" width="7.3" height="2.6" fill="#f0b080"/><rect x="0.3" y="11.7" width="7.3" height="2.1" fill="#9a6248"/><rect x="8.6" y="9.1" width="15.2" height="2.6" fill="#f0b080"/><rect x="8.600" y="11.7" width="15.2" height="2.1" fill="#9a6248"/><rect x="0.3" y="17.4" width="7.3" height="2.6" fill="#ffd84a"/><rect x="0.3" y="20" width="7.3" height="2.1" fill="#c98a2a"/><rect x="8.6" y="17.4" width="15.2" height="2.6" fill="#ffd84a"/><rect x="8.600" y="20" width="15.2" height="2.1" fill="#c98a2a"/><rect x="0.3" y="25.7" width="7.3" height="2.6" fill="#7af0ff"/><rect x="0.3" y="28.3" width="7.3" height="2.1" fill="#2f9fc0"/><rect x="8.6" y="25.7" width="15.2" height="2.6" fill="#7af0ff"/><rect x="8.600" y="28.3" width="15.2" height="2.1" fill="#2f9fc0"/></svg>
<svg style="left:129.7px;top:1949.85px;width:32px;height:32px;" viewBox="0 0 32 32"><rect x="2.1" y="6" width="3.6" height="2.6" rx="1" fill="#a6c83a"/><rect x="2.1" y="8.6" width="3.600" height="1" fill="#55702a"/><rect x="10" y="6" width="3.6" height="2.6" rx="1" fill="#a6c83a"/><rect x="10" y="8.6" width="3.600" height="1" fill="#55702a"/><rect x="17.9" y="6" width="3.6" height="2.6" rx="1" fill="#a6c83a"/><rect x="17.9" y="8.6" width="3.600" height="1" fill="#55702a"/><rect x="26" y="6" width="3.6" height="2.6" rx="1" fill="#a6c83a"/><rect x="26" y="8.6" width="3.600" height="1" fill="#55702a"/><rect x="2.1" y="15.2" width="3.6" height="2.6" rx="1" fill="#a6c83a"/><rect x="2.1" y="17.8" width="3.600" height="1" fill="#55702a"/><rect x="10" y="15.2" width="3.6" height="2.6" rx="1" fill="#a6c83a"/><rect x="10" y="17.8" width="3.600" height="1" fill="#55702a"/><rect x="17.9" y="15.2" width="3.6" height="2.6" rx="1" fill="#a6c83a"/><rect x="17.9" y="17.8" width="3.600" height="1" fill="#55702a"/><rect x="26" y="15.2" width="3.6" height="2.6" rx="1" fill="#a6c83a"/><rect x="26" y="17.8" width="3.600" height="1" fill="#55702a"/><rect x="2.1" y="24.3" width="3.6" height="2.6" rx="1" fill="#a6c83a"/><rect x="2.1" y="26.9" width="3.600" height="1" fill="#55702a"/><rect x="10" y="24.3" width="3.6" height="2.6" rx="1" fill="#a6c83a"/><rect x="10" y="26.9" width="3.600" height="1" fill="#55702a"/><rect x="17.9" y="24.3" width="3.6" height="2.6" rx="1" fill="#c85030"/><rect x="17.9" y="26.9" width="3.600" height="1" fill="#55702a"/><rect x="26" y="24.3" width="3.6" height="2.6" rx="1" fill="#a6c83a"/><rect x="26" y="26.9" width="3.600" height="1" fill="#55702a"/></svg>
<svg style="left:129.7px;top:2004.9px;width:32px;height:32px;" viewBox="0 0 32 32"><rect x="2.1" y="6" width="3.6" height="2.6" rx="1" fill="#b8487a"/><rect x="2.1" y="8.6" width="3.600" height="1" fill="#5a2848"/><rect x="10" y="6" width="3.6" height="2.6" rx="1" fill="#b8487a"/><rect x="10" y="8.6" width="3.600" height="1" fill="#5a2848"/><rect x="17.9" y="6" width="3.6" height="2.6" rx="1" fill="#b8487a"/><rect x="17.9" y="8.6" width="3.600" height="1" fill="#5a2848"/><rect x="26" y="6" width="3.6" height="2.6" rx="1" fill="#b8487a"/><rect x="26" y="8.6" width="3.600" height="1" fill="#5a2848"/><rect x="2.1" y="15.2" width="3.6" height="2.6" rx="1" fill="#b8487a"/><rect x="2.1" y="17.8" width="3.600" height="1" fill="#5a2848"/><rect x="10" y="15.2" width="3.6" height="2.6" rx="1" fill="#b8487a"/><rect x="10" y="17.8" width="3.600" height="1" fill="#5a2848"/><rect x="17.9" y="15.2" width="3.6" height="2.6" rx="1" fill="#b8487a"/><rect x="17.9" y="17.8" width="3.600" height="1" fill="#5a2848"/><rect x="26" y="15.2" width="3.6" height="2.6" rx="1" fill="#b8487a"/><rect x="26" y="17.8" width="3.600" height="1" fill="#5a2848"/><rect x="2.1" y="24.3" width="3.6" height="2.6" rx="1" fill="#b8487a"/><rect x="2.1" y="26.9" width="3.600" height="1" fill="#5a2848"/><rect x="10" y="24.3" width="3.6" height="2.6" rx="1" fill="#b8487a"/><rect x="10" y="26.9" width="3.600" height="1" fill="#5a2848"/><rect x="17.9" y="24.3" width="3.6" height="2.6" rx="1" fill="#d85060"/><rect x="17.9" y="26.9" width="3.600" height="1" fill="#5a2848"/><rect x="26" y="24.3" width="3.6" height="2.6" rx="1" fill="#b8487a"/><rect x="26" y="26.9" width="3.600" height="1" fill="#5a2848"/></svg>
<svg style="left:129.7px;top:2059.95px;width:32px;height:32px;" viewBox="0 0 32 32"><rect x="4.5" y="0.5" width="1.500" height="1.500" fill="#8a6a4a"/><rect x="10.5" y="0.5" width="1.500" height="1.500" fill="#a07a4a"/><rect x="12.5" y="0.5" width="1.500" height="1.500" fill="#7a5a3a"/><rect x="16.5" y="0.5" width="1.500" height="1.500" fill="#a07a4a"/><rect x="0.5" y="2.6" width="1.500" height="1.500" fill="#3a7a6a"/><rect x="4.5" y="2.6" width="1.500" height="1.500" fill="#7a5a3a"/><rect x="6.5" y="2.6" width="1.500" height="1.500" fill="#a07a4a"/><rect x="8.5" y="2.6" width="1.500" height="1.500" fill="#2f5f5a"/><rect x="14.5" y="2.6" width="1.500" height="1.500" fill="#4a8a5a"/><rect x="0.5" y="4.7" width="1.500" height="1.500" fill="#c08a4a"/><rect x="2.5" y="4.7" width="1.500" height="1.500" fill="#8a6a4a"/><rect x="8.5" y="4.7" width="1.500" height="1.500" fill="#a07a4a"/><rect x="14.5" y="4.7" width="1.500" height="1.500" fill="#a07a4a"/><rect x="16.5" y="4.7" width="1.500" height="1.500" fill="#2f5f5a"/><rect x="0.5" y="6.8" width="1.500" height="1.500" fill="#a07a4a"/><rect x="2.5" y="6.8" width="1.500" height="1.500" fill="#8a6a4a"/><rect x="8.5" y="6.8" width="1.500" height="1.500" fill="#3a7a6a"/><rect x="12.5" y="6.8" width="1.500" height="1.500" fill="#a07a4a"/><rect x="14.5" y="6.8" width="1.500" height="1.500" fill="#3a4a5a"/><rect x="16.5" y="6.8" width="1.500" height="1.500" fill="#8a6a4a"/><rect x="0.5" y="8.9" width="1.500" height="1.500" fill="#2f5f5a"/><rect x="4.5" y="8.9" width="1.500" height="1.500" fill="#3a4a5a"/><rect x="8.5" y="8.9" width="1.500" height="1.500" fill="#4a8a5a"/><rect x="10.5" y="8.9" width="1.500" height="1.500" fill="#2f5f5a"/><rect x="12.5" y="8.9" width="1.500" height="1.500" fill="#3a7a6a"/><rect x="14.5" y="8.9" width="1.500" height="1.500" fill="#2f5f5a"/><rect x="0.5" y="11" width="1.500" height="1.500" fill="#2f5f5a"/><rect x="4.5" y="11" width="1.500" height="1.500" fill="#a07a4a"/><rect x="6.5" y="11" width="1.500" height="1.500" fill="#7a5a3a"/><rect x="8.5" y="11" width="1.500" height="1.500" fill="#3a7a6a"/><rect x="10.5" y="11" width="1.500" height="1.500" fill="#a07a4a"/><rect x="12.5" y="11" width="1.500" height="1.500" fill="#4a8a5a"/><rect x="0.5" y="13.1" width="1.500" height="1.500" fill="#c08a4a"/><rect x="2.5" y="13.1" width="1.500" height="1.500" fill="#3a7a6a"/><rect x="8.5" y="13.1" width="1.500" height="1.500" fill="#8a6a4a"/><rect x="12.5" y="13.1" width="1.500" height="1.500" fill="#8a6a4a"/><rect x="14.5" y="13.1" width="1.500" height="1.500" fill="#7a5a3a"/><rect x="16.5" y="13.1" width="1.500" height="1.500" fill="#3a4a5a"/><rect x="2.5" y="15.2" width="1.500" height="1.500" fill="#4a8a5a"/><rect x="4.5" y="15.2" width="1.500" height="1.500" fill="#3a7a6a"/><rect x="6.5" y="15.2" width="1.500" height="1.500" fill="#2f5f5a"/><rect x="8.5" y="15.2" width="1.500" height="1.500" fill="#2f5f5a"/><rect x="14.5" y="15.2" width="1.500" height="1.500" fill="#8a6a4a"/><rect x="16.5" y="15.2" width="1.500" height="1.500" fill="#3a4a5a"/><rect x="0.5" y="17.3" width="1.500" height="1.500" fill="#4a8a5a"/><rect x="2.5" y="17.3" width="1.500" height="1.500" fill="#3a7a6a"/><rect x="4.5" y="17.3" width="1.500" height="1.500" fill="#a07a4a"/><rect x="6.5" y="17.3" width="1.500" height="1.500" fill="#c08a4a"/><rect x="8.5" y="17.3" width="1.500" height="1.500" fill="#2f5f5a"/><rect x="10.5" y="17.3" width="1.500" height="1.500" fill="#2f5f5a"/><rect x="12.5" y="17.3" width="1.500" height="1.500" fill="#3a4a5a"/><rect x="16.5" y="17.3" width="1.500" height="1.500" fill="#2f5f5a"/><rect x="0" y="19.500" width="3" height="12" fill="#3a6ad0"/><rect x="3" y="19.500" width="2.500" height="12" fill="#e8e8f0"/><rect x="5.500" y="19.500" width="3" height="12" fill="#d04a5a"/><rect x="8.500" y="21.500" width="3" height="8" fill="#e8a070"/><rect x="11.500" y="23" width="3" height="4" fill="#8a4a3a"/><rect x="0" y="19.500" width="12" height="1.500" fill="#5a8ad8"/></svg>
<div style="left:17.1px;top:2142.5px;width:523.7px;height:7.9px;background:#363d4a;border-radius:0 0 7px 7px;"></div>
<div style="left:9px;top:2150.4px;width:540px;height:9.6px;background:#1d2229;"></div>
<div style="left:565.4px;top:87.2px;width:2709.8px;height:54.8px;background:#252b34;border-radius:7px 7px 0 0;"></div>
<div style="left:565.4px;top:142px;width:2709.8px;height:83px;background:#363d4a;"></div>
<div style="left:890px;top:87.2px;width:294.7px;height:54.8px;background:#363d4a;"></div>
<div style="left:890px;top:87.2px;width:294.7px;height:4px;background:#6a9ccb;"></div>
<svg style="left:587px;top:98px;width:32px;height:32px;opacity:0.92;" viewBox="0 0 16 16"><circle cx="8" cy="8" r="5" fill="none" stroke="#8da5f3" stroke-width="2"/></svg>
<span style="left:628px;top:99.8px;font-size:29.3px;color:#767b84;transform:scaleX(0.9919);">game</span>
<svg style="left:746.2px;top:98.4px;width:32px;height:32px;opacity:0.92;" viewBox="0 0 16 16"><rect x="5.300" y=".7" width="6" height="5.800" rx="1.200" fill="#8da5f3"/><rect x="6.700" y="2.800" width="1.200" height="1.500" fill="#252b34"/><rect x="9" y="2.800" width="1.200" height="1.500" fill="#252b34"/><path d="M6.400 6.500h3.900v3.700H6.400z" fill="#8da5f3"/><path d="M6.400 7.500L2.600 6 2.800 9M10.300 8l3.700 1.600M7.200 10l-2 2.600-3 1.700M9.500 10l.9 3.500h3.700" fill="none" stroke="#8da5f3" stroke-width="1.900" stroke-linecap="round" stroke-linejoin="round"/></svg>
<span style="left:787.2px;top:99.8px;font-size:29.3px;color:#767b84;transform:scaleX(1.0038);">player</span>
<svg style="left:912px;top:98.4px;width:32px;height:32px;" viewBox="0 0 16 16"><path fill="none" stroke="#8da5f3" stroke-width="1.600" stroke-linejoin="round" d="M8 2.800h5.200a1 1 0 0 1 1 1v9.400a1 1 0 0 1-1 1H3.800a1 1 0 0 1-1-1V8.500"/><path fill="none" stroke="#8da5f3" stroke-width="1.700" stroke-linecap="round" d="M1.400 1.800l8.300 8"/><path fill="none" stroke="#8da5f3" stroke-width="1.500" stroke-linecap="round" stroke-linejoin="round" d="M6.300 1.400l2.300 .4.500 1.600M1.300 7.200l.4 2 2 .5"/><rect x="11" y="4.400" width="2" height="2" fill="#8da5f3"/><rect x="4.400" y="11" width="2" height="2" fill="#8da5f3"/><rect x="11" y="11" width="2" height="2" fill="#8da5f3"/></svg>
<span style="left:953.5px;top:99.8px;font-size:29.3px;color:#cdcfd2;transform:scaleX(0.997);">[unsaved](*)</span>
<svg style="left:1131.4px;top:99.4px;width:30px;height:30px;" viewBox="0 0 16 16"><path d="M3 3l10 10M13 3L3 13" stroke="#f0f0f0" stroke-width="2.200"/></svg>
<svg style="left:1205.5px;top:99.4px;width:30px;height:30px;" viewBox="0 0 16 16"><path d="M7 1v6H1v2h6v6h2V9h6V7H9V1z" fill="#7b8088"/></svg>
<svg style="left:3231px;top:97.7px;width:32px;height:32px;" viewBox="0 0 16 16"><path d="M1 1v5.200l1.900-1.900 2.500 2.500 1.400-1.400-2.500-2.500L6.200 1z" fill="#e0e0e0"/><path d="M1 1v5.200l1.900-1.900 2.500 2.500 1.400-1.400-2.500-2.500L6.200 1z" fill="#e0e0e0" transform="translate(16 0) scale(-1 1)"/><path d="M1 1v5.200l1.900-1.900 2.500 2.500 1.400-1.400-2.500-2.500L6.200 1z" fill="#e0e0e0" transform="translate(0 16) scale(1 -1)"/><path d="M1 1v5.200l1.900-1.900 2.500 2.500 1.400-1.400-2.500-2.500L6.200 1z" fill="#e0e0e0" transform="translate(16 16) scale(-1 -1)"/></svg>
<div style="left:573px;top:150.2px;width:55.8px;height:58.5px;background:#1f242c;border-radius:6px;"></div>
<svg style="left:584.8px;top:163.3px;width:32px;height:32px;" viewBox="0 0 16 16"><path d="M2 2l11.600 5.200-3.800 1.200 2.800 2.800-1.400 1.400-2.800-2.800-1.200 3.800z" fill="#70bafa"/></svg>
<div style="left:638.4px;top:151px;width:1.6px;height:57px;background:#4a515d;"></div>
<div style="left:842.2px;top:151px;width:1.6px;height:57px;background:#4a515d;"></div>
<div style="left:1110.2px;top:151px;width:1.6px;height:57px;background:#4a515d;"></div>
<div style="left:1314.4px;top:151px;width:1.6px;height:57px;background:#4a515d;"></div>
<div style="left:1454.2px;top:151px;width:1.6px;height:57px;background:#4a515d;"></div>
<div style="left:1530.2px;top:151px;width:1.6px;height:57px;background:#4a515d;"></div>
<div style="left:1606.2px;top:151px;width:1.6px;height:57px;background:#4a515d;"></div>
<div style="left:1711.2px;top:151px;width:1.6px;height:57px;background:#4a515d;"></div>
<svg style="left:661.2px;top:163.3px;width:32px;height:32px;" viewBox="0 0 16 16"><path d="M8 .8L5.700 3.800h4.600zM8 15.200l2.300-3H5.700zM.8 8l3 2.300V5.700zM15.200 8l-3-2.300v4.600z" fill="#e0e0e0" stroke="#e0e0e0" stroke-width=".3" stroke-linejoin="round"/><circle cx="8" cy="8" r="2.200" fill="#e0e0e0"/></svg>
<svg style="left:725px;top:163.3px;width:32px;height:32px;" viewBox="0 0 16 16"><path d="M2.700 10.600A6 6 0 1 1 13.300 11" fill="none" stroke="#e0e0e0" stroke-width="2" stroke-linecap="butt"/><path d="M.5 10l5 -.6-.2 5.300-2.700-.1z" fill="#e0e0e0"/><circle cx="8" cy="8" r="2" fill="#e0e0e0"/></svg>
<svg style="left:789px;top:163.3px;width:32px;height:32px;" viewBox="0 0 16 16"><path d="M9 1h6v6h-2.200V4.700l-1.700 1.700-1.500-1.500 1.700-1.700H9zM1 9v6h6v-2.200H4.700l1.700-1.700-1.500-1.500-1.700 1.700V9z" fill="#e0e0e0"/><circle cx="8" cy="8" r="2" fill="#e0e0e0"/></svg>
<svg style="left:865.5px;top:163.3px;width:32px;height:32px;" viewBox="0 0 16 16"><path d="M.9 .9h10.700v2.300H3.200v3.500h6.300v2.300H3.200v3.500h3.300v2.300H.9z" fill="#e0e0e0"/><path d="M7.400 8.200l8 3.600-3 1.200 2.300 2.300-1.400 1.400-2.300-2.300-1.200 3z" fill="#e0e0e0" stroke="#363d4a" stroke-width=".7"/></svg>
<svg style="left:930.7px;top:163.3px;width:32px;height:32px;opacity:0.35;" viewBox="0 0 16 16"><path d="M6.200 .9v4h2v-4zM.9 6.200v2h4v-2zM10 6.200v2h4.800v-2zM6.200 10v4.800h2V10z" fill="#e0e0e0"/><path d="M7.400 8.200l8 3.600-3 1.200 2.300 2.300-1.400 1.400-2.300-2.300-1.200 3z" fill="#e0e0e0" stroke="#363d4a" stroke-width=".7"/></svg>
<svg style="left:992.5px;top:163.3px;width:32px;height:32px;" viewBox="0 0 16 16"><path d="M7 4a1.150 1.150 0 0 1 2.300 0v4h.5V2.200a1.100 1.100 0 0 1 2.200 0V8h.5V4.300a1 1 0 0 1 2 0v6.500a4 4 0 0 1-4 4H9.200a3.500 3.500 0 0 1-2.800-1.400L1.800 10.200a1.150 1.150 0 0 1 1.600-1.600L6.400 11H7z" fill="#e0e0e0"/></svg>
<svg style="left:1055.8px;top:163.3px;width:32px;height:32px;" viewBox="0 0 16 16"><path fill-rule="evenodd" d="M1.800 1.200v13.600h13.500zM4.900 8.200l3.700 3.500H4.900z" fill="#e0e0e0"/></svg>
<svg style="left:1134.8px;top:163.3px;width:32px;height:32px;" viewBox="0 0 16 16"><path d="M2 2.900h2v2H2zM8.100 2.900h2v2h-2zM2 8.800h2v2H2z" fill="#e0e0e0"/><path d="M6.100 14.800v-3.900a4 4 0 0 1 8 0v3.900h-2v-3.900a2 2 0 0 0-4 0v3.900z" fill="#aeb2b9"/><path d="M6.100 14.800v-1.800h2v1.800zM12.100 14.800v-1.800h2v1.800z" fill="#e0e0e0"/></svg>
<svg style="left:1196.3px;top:163.3px;width:32px;height:32px;" viewBox="0 0 16 16"><path d="M2.300 0h1v2h4.300V0h1v2h4.300V0h1v2h1.500v1h-1.500v2.600h-1V3H8.600v3.600h-1V3H3.300v4h3.500v1H3.300v4h2.500v1H3.300v2h-1v-2H.300v-1h2V8H.300V7h2V3H.300V2h2z" fill="#e0e0e0"/><path d="M7.300 14.800v-3.900a4 4 0 0 1 8 0v3.900h-2v-3.900a2 2 0 0 0-4 0v3.900z" fill="#aeb2b9"/><path d="M7.300 14.800v-1.800h2v1.800zM13.300 14.800v-1.800h2v1.800z" fill="#e0e0e0"/></svg>
<svg style="left:1260.8px;top:163.3px;width:32px;height:32px;" viewBox="0 0 16 16"><circle cx="8" cy="2.200" r="2.200" fill="#e0e0e0"/><circle cx="8" cy="8" r="2.200" fill="#e0e0e0"/><circle cx="8" cy="13.800" r="2.200" fill="#e0e0e0"/></svg>
<svg style="left:1336.8px;top:163.3px;width:32px;height:32px;" viewBox="0 0 16 16"><path fill-rule="evenodd" d="M8.200 1.050a5 5 0 0 0-5 5V8H2.100v6.800h12.200V8h-1.100V6.050a5 5 0 0 0-5-5zm0 2a3 3 0 0 1 3 3V8h-6V6.050a3 3 0 0 1 3-3zM7.100 9.700h2.100v3.100H7.100z" fill="#e0e0e0"/></svg>
<svg style="left:1401px;top:163.3px;width:32px;height:32px;" viewBox="0 0 16 16"><path d="M1 1.050h2v2H1zM13 1.050h2v2h-2zM1 12.800h2v2H1zM13 12.800h2v2h-2z" fill="#f4f4f4"/><path d="M1 7h7.800v7.800H3v-2H1z" fill="#e0e0e0" fill-opacity=".42"/><path fill-rule="evenodd" d="M6.850 1.050H13v2h2V9H8.800V7H6.850zM8.850 3.050V7H13V3.050z" fill="#e0e0e0" fill-opacity=".42"/></svg>
<svg style="left:1477px;top:163.3px;width:32px;height:32px;" viewBox="0 0 16 16"><path d="M4.800 11.200l6.800-6.800" stroke="#e0e0e0" stroke-width="3.400"/><circle cx="10.400" cy="3.100" r="2.250" fill="#e0e0e0"/><circle cx="12.900" cy="5.800" r="2.250" fill="#e0e0e0"/><circle cx="3.050" cy="10.100" r="2.250" fill="#e0e0e0"/><circle cx="5.600" cy="12.700" r="2.250" fill="#e0e0e0"/></svg>
<svg style="left:1551.5px;top:163.3px;width:32px;height:32px;opacity:0.42;" viewBox="0 0 16 16"><circle cx="4.300" cy="6.700" r="2.400" fill="#8da5f3"/><circle cx="9.400" cy="4.800" r="3.050" fill="#8da5f3"/><path d="M3.400 7h8.900v2.600l2.500-2.200v5l-2.500-2.200v1.600a1 1 0 0 1-1 1H4.400a1 1 0 0 1-1-1z" fill="#8da5f3"/></svg>
<span style="left:1629px;top:164.8px;font-size:29.3px;color:#cdcfd2;transform:scaleX(0.959);">View</span>
<div style="left:565.2px;top:217px;width:2710px;height:1347.1px;background:#4d4d4d;border-radius:6px;overflow:hidden;"></div>
<div style="left:565.2px;top:217px;width:2710px;height:30px;background:#1e222a;border-radius:6px 6px 0 0;"></div>
<div style="left:565.2px;top:217px;width:29.8px;height:1347.1px;background:#1e222a;border-radius:6px 0 0 6px;"></div>
<div style="left:567.2px;top:219px;width:27.8px;height:28px;background:#6f757f;border-radius:5px 0 0 0;"></div>
<svg style="left:0px;top:0px;width:3840px;height:1600px;" viewBox="0 0 3840 1600"><g fill="#8d929a"><rect x="624" y="239.5" width="2" height="7.5"/><rect x="666.4" y="239.5" width="2" height="7.5"/><rect x="708.8" y="239.5" width="2" height="7.5"/><rect x="751.2" y="239.5" width="2" height="7.5"/><rect x="793.6" y="227.2" width="2" height="19.8"/><rect x="836" y="239.5" width="2" height="7.5"/><rect x="878.4" y="239.5" width="2" height="7.5"/><rect x="920.8" y="239.5" width="2" height="7.5"/><rect x="963.2" y="239.5" width="2" height="7.5"/><rect x="1005.6" y="217" width="2" height="30"/><rect x="1048" y="239.5" width="2" height="7.5"/><rect x="1090.4" y="239.5" width="2" height="7.5"/><rect x="1132.8" y="239.5" width="2" height="7.5"/><rect x="1175.2" y="239.5" width="2" height="7.5"/><rect x="1217.6" y="227.2" width="2" height="19.8"/><rect x="1260" y="239.5" width="2" height="7.5"/><rect x="1302.4" y="239.5" width="2" height="7.5"/><rect x="1344.8" y="239.5" width="2" height="7.5"/><rect x="1387.2" y="239.5" width="2" height="7.5"/><rect x="1429.6" y="217" width="2" height="30"/><rect x="1472" y="239.5" width="2" height="7.5"/><rect x="1514.4" y="239.5" width="2" height="7.5"/><rect x="1556.8" y="239.5" width="2" height="7.5"/><rect x="1599.2" y="239.5" width="2" height="7.5"/><rect x="1641.6" y="227.2" width="2" height="19.8"/><rect x="1684" y="239.5" width="2" height="7.5"/><rect x="1726.4" y="239.5" width="2" height="7.5"/><rect x="1768.8" y="239.5" width="2" height="7.5"/><rect x="1811.2" y="239.5" width="2" height="7.5"/><rect x="1853.6" y="217" width="2" height="30"/><rect x="1896" y="239.5" width="2" height="7.5"/><rect x="1938.4" y="239.5" width="2" height="7.5"/><rect x="1980.8" y="239.5" width="2" height="7.5"/><rect x="2023.2" y="239.5" width="2" height="7.5"/><rect x="2065.6" y="227.2" width="2" height="19.8"/><rect x="2108" y="239.5" width="2" height="7.5"/><rect x="2150.4" y="239.5" width="2" height="7.5"/><rect x="2192.8" y="239.5" width="2" height="7.5"/><rect x="2235.2" y="239.5" width="2" height="7.5"/><rect x="2277.6" y="217" width="2" height="30"/><rect x="2320" y="239.5" width="2" height="7.5"/><rect x="2362.4" y="239.5" width="2" height="7.5"/><rect x="2404.8" y="239.5" width="2" height="7.5"/><rect x="2447.2" y="239.5" width="2" height="7.5"/><rect x="2489.6" y="227.2" width="2" height="19.8"/><rect x="2532" y="239.5" width="2" height="7.5"/><rect x="2574.4" y="239.5" width="2" height="7.5"/><rect x="2616.8" y="239.5" width="2" height="7.5"/><rect x="2659.2" y="239.5" width="2" height="7.5"/><rect x="2701.6" y="217" width="2" height="30"/><rect x="2744" y="239.5" width="2" height="7.5"/><rect x="2786.4" y="239.5" width="2" height="7.5"/><rect x="2828.8" y="239.5" width="2" height="7.5"/><rect x="2871.2" y="239.5" width="2" height="7.5"/><rect x="2913.6" y="227.2" width="2" height="19.8"/><rect x="2956" y="239.5" width="2" height="7.5"/><rect x="2998.4" y="239.5" width="2" height="7.5"/><rect x="3040.8" y="239.5" width="2" height="7.5"/><rect x="3083.2" y="239.5" width="2" height="7.5"/><rect x="3125.6" y="217" width="2" height="30"/><rect x="3168" y="239.5" width="2" height="7.5"/><rect x="3210.4" y="239.5" width="2" height="7.5"/><rect x="3252.8" y="239.5" width="2" height="7.5"/><rect x="587" y="271.1" width="8" height="2"/><rect x="575" y="313.5" width="20" height="2"/><rect x="587" y="355.9" width="8" height="2"/><rect x="587" y="398.3" width="8" height="2"/><rect x="587" y="440.7" width="8" height="2"/><rect x="587" y="483.1" width="8" height="2"/><rect x="565.2" y="525.5" width="29.8" height="2"/><rect x="587" y="567.9" width="8" height="2"/><rect x="587" y="610.3" width="8" height="2"/><rect x="587" y="652.7" width="8" height="2"/><rect x="587" y="695.1" width="8" height="2"/><rect x="575" y="737.5" width="20" height="2"/><rect x="587" y="779.9" width="8" height="2"/><rect x="587" y="822.3" width="8" height="2"/><rect x="587" y="864.7" width="8" height="2"/><rect x="587" y="907.1" width="8" height="2"/><rect x="565.2" y="949.5" width="29.8" height="2"/><rect x="587" y="991.9" width="8" height="2"/><rect x="587" y="1034.3" width="8" height="2"/><rect x="587" y="1076.7" width="8" height="2"/><rect x="587" y="1119.1" width="8" height="2"/><rect x="575" y="1161.5" width="20" height="2"/><rect x="587" y="1203.9" width="8" height="2"/><rect x="587" y="1246.3" width="8" height="2"/><rect x="587" y="1288.7" width="8" height="2"/><rect x="587" y="1331.1" width="8" height="2"/><rect x="565.2" y="1373.5" width="29.8" height="2"/><rect x="587" y="1415.9" width="8" height="2"/><rect x="587" y="1458.3" width="8" height="2"/><rect x="587" y="1500.7" width="8" height="2"/><rect x="587" y="1543.1" width="8" height="2"/></g></svg>
<span style="left:1009.2px;top:224.79px;font-size:15.6px;color:#b4b7bc;transform:scaleX(0.9897);">-50</span>
<span style="left:1433.2px;top:224.79px;font-size:15.6px;color:#b4b7bc;transform:scaleX(0.9897);">-25</span>
<span style="left:1857.2px;top:224.79px;font-size:15.6px;color:#b4b7bc;transform:scaleX(0.988);">0</span>
<span style="left:2281.2px;top:224.79px;font-size:15.6px;color:#b4b7bc;transform:scaleX(0.9889);">25</span>
<span style="left:2705.2px;top:224.79px;font-size:15.6px;color:#b4b7bc;transform:scaleX(0.9889);">50</span>
<span style="left:3129.2px;top:224.79px;font-size:15.6px;color:#b4b7bc;transform:scaleX(0.9889);">75</span>
<span style="left:586.2px;top:523.3px;font-size:15.6px;color:#b4b7bc;transform:rotate(-90deg) scaleX(0.99) translateY(-13.21px);">-25</span>
<span style="left:586.2px;top:947.3px;font-size:15.6px;color:#b4b7bc;transform:rotate(-90deg) scaleX(0.99) translateY(-13.21px);">0</span>
<span style="left:586.2px;top:1371.3px;font-size:15.6px;color:#b4b7bc;transform:rotate(-90deg) scaleX(0.99) translateY(-13.21px);">25</span>
<div style="left:595px;top:949.7px;width:1259.6px;height:1.6px;background:#8d4553;"></div>
<div style="left:1854.6px;top:949.7px;width:1416.6px;height:1.6px;background:#785c78;"></div>
<div style="left:1853.8px;top:247px;width:1.6px;height:703.5px;background:#7d9a36;"></div>
<div style="left:1853.8px;top:950.5px;width:1.6px;height:609.6px;background:#9a9aa4;"></div>
<svg style="left:613px;top:263px;width:30px;height:30px;" viewBox="0 0 16 16"><rect x="5.800" y="5.800" width="4.400" height="4.400" rx="1" fill="#e0e0e0"/><path d="M5.300 0.800L8 3.500l2.700-2.700M5.300 15.200L8 12.500l2.700 2.700M0.800 5.300L3.500 8 0.800 10.700M15.200 5.300L12.500 8l2.700 2.700" fill="none" stroke="#e0e0e0" stroke-width="1.700"/></svg>
<svg style="left:674.8px;top:261px;width:34px;height:34px;" viewBox="0 0 34 34"><circle cx="17" cy="17.6" r="15.6" fill="#2a2a2a" fill-opacity=".55"/><circle cx="17" cy="17" r="14.3" fill="#e0e0e0"/><rect x="9" y="15" width="16" height="4.200" fill="#3a3a3a"/></svg>
<svg style="left:843px;top:261px;width:34px;height:34px;" viewBox="0 0 34 34"><circle cx="17" cy="17.6" r="15.6" fill="#2a2a2a" fill-opacity=".55"/><circle cx="17" cy="17" r="14.3" fill="#e0e0e0"/><rect x="9" y="15" width="16" height="4.200" fill="#3a3a3a"/><rect x="14.900" y="9" width="4.200" height="16" fill="#3a3a3a"/></svg>
<span style="left:738px;top:263.65px;font-size:29px;color:#ffffff;transform:scaleX(0.9242);text-shadow:0 0 2px #222,0 0 2px #222,0 1px 2px #222;">848 %</span>
<div style="left:3260.2px;top:255px;width:7px;height:1276.7px;background:#595959;border-radius:4px;"></div>
<div style="left:3260.2px;top:558.6px;width:7px;height:341.1px;background:#8e8e8e;border-radius:4px;"></div>
<div style="left:603px;top:1548.5px;width:2639.3px;height:7.2px;background:#5b5b5b;border-radius:4px;"></div>
<div style="left:1244.7px;top:1548.5px;width:691.7px;height:7.2px;background:#8e8e8e;border-radius:4px;"></div>
<svg style="left:1583.24px;top:874.18px;width:542.72px;height:152.64px;shape-rendering:crispEdges;" viewBox="0 0 542.72 152.64"><rect x="33.92" y="0" width="474.88" height="152.64" fill="#1f1d1a"/><rect x="0" y="8.48" width="542.72" height="135.68" fill="#2c7381"/><rect x="33.92" y="8.48" width="474.88" height="135.68" fill="#14555b"/><rect x="16.76" y="16.76" width="17.36" height="17.36" fill="#14555b"/><rect x="33.72" y="16.76" width="475.28" height="17.36" fill="#5bc171"/><rect x="508.6" y="16.76" width="17.36" height="17.36" fill="#14555b"/><rect x="-0.2" y="33.72" width="17.36" height="17.36" fill="#14555b"/><rect x="16.76" y="33.72" width="68.24" height="17.36" fill="#5bc171"/><rect x="84.6" y="33.72" width="34.32" height="17.36" fill="#31b264"/><rect x="118.52" y="33.72" width="17.36" height="17.36" fill="#5bc171"/><rect x="135.48" y="33.72" width="34.32" height="17.36" fill="#31b264"/><rect x="169.4" y="33.72" width="34.32" height="17.36" fill="#5bc171"/><rect x="203.32" y="33.72" width="51.28" height="17.36" fill="#31b264"/><rect x="254.2" y="33.72" width="17.36" height="17.36" fill="#5bc171"/><rect x="271.16" y="33.72" width="34.32" height="17.36" fill="#31b264"/><rect x="305.08" y="33.72" width="34.32" height="17.36" fill="#5bc171"/><rect x="339" y="33.72" width="68.24" height="17.36" fill="#31b264"/><rect x="406.84" y="33.72" width="17.36" height="17.36" fill="#5bc171"/><rect x="423.8" y="33.72" width="17.36" height="17.36" fill="#31b264"/><rect x="440.76" y="33.72" width="34.32" height="17.36" fill="#5bc171"/><rect x="474.68" y="33.72" width="17.36" height="17.36" fill="#31b264"/><rect x="491.64" y="33.72" width="34.32" height="17.36" fill="#5bc171"/><rect x="525.56" y="33.72" width="17.36" height="17.36" fill="#14555b"/><rect x="-0.2" y="50.68" width="17.36" height="17.36" fill="#14555b"/><rect x="16.76" y="50.68" width="17.36" height="17.36" fill="#5bc171"/><rect x="33.72" y="50.68" width="17.36" height="17.36" fill="#31b264"/><rect x="50.68" y="50.68" width="34.32" height="17.36" fill="#5bc171"/><rect x="84.6" y="50.68" width="85.2" height="17.36" fill="#31b264"/><rect x="169.4" y="50.68" width="34.32" height="17.36" fill="#5bc171"/><rect x="203.32" y="50.68" width="17.36" height="17.36" fill="#31b264"/><rect x="220.28" y="50.68" width="17.36" height="17.36" fill="#5bc171"/><rect x="237.24" y="50.68" width="68.24" height="17.36" fill="#31b264"/><rect x="305.08" y="50.68" width="34.32" height="17.36" fill="#5bc171"/><rect x="339" y="50.68" width="17.36" height="17.36" fill="#31b264"/><rect x="355.96" y="50.68" width="17.36" height="17.36" fill="#5bc171"/><rect x="372.92" y="50.68" width="68.24" height="17.36" fill="#31b264"/><rect x="440.76" y="50.68" width="34.32" height="17.36" fill="#5bc171"/><rect x="474.68" y="50.68" width="34.32" height="17.36" fill="#31b264"/><rect x="508.6" y="50.68" width="17.36" height="17.36" fill="#5bc171"/><rect x="525.56" y="50.68" width="17.36" height="17.36" fill="#14555b"/><rect x="-0.2" y="67.64" width="17.36" height="17.36" fill="#14555b"/><rect x="16.76" y="67.64" width="17.36" height="17.36" fill="#0b866b"/><rect x="33.72" y="67.64" width="85.2" height="17.36" fill="#31b264"/><rect x="118.52" y="67.64" width="34.32" height="17.36" fill="#0b866b"/><rect x="152.44" y="67.64" width="102.16" height="17.36" fill="#31b264"/><rect x="254.2" y="67.64" width="34.32" height="17.36" fill="#0b866b"/><rect x="288.12" y="67.64" width="102.16" height="17.36" fill="#31b264"/><rect x="389.88" y="67.64" width="34.32" height="17.36" fill="#0b866b"/><rect x="423.8" y="67.64" width="85.2" height="17.36" fill="#31b264"/><rect x="508.6" y="67.64" width="17.36" height="17.36" fill="#0b866b"/><rect x="525.56" y="67.64" width="17.36" height="17.36" fill="#14555b"/><rect x="-0.2" y="84.6" width="17.36" height="17.36" fill="#14555b"/><rect x="16.76" y="84.6" width="34.32" height="17.36" fill="#0b866b"/><rect x="50.68" y="84.6" width="17.36" height="17.36" fill="#31b264"/><rect x="67.64" y="84.6" width="17.36" height="17.36" fill="#0b866b"/><rect x="84.6" y="84.6" width="17.36" height="17.36" fill="#31b264"/><rect x="101.56" y="84.6" width="17.36" height="17.36" fill="#0b866b"/><rect x="118.52" y="84.6" width="34.32" height="17.36" fill="#0d6b69"/><rect x="152.44" y="84.6" width="17.36" height="17.36" fill="#0b866b"/><rect x="169.4" y="84.6" width="34.32" height="17.36" fill="#31b264"/><rect x="203.32" y="84.6" width="17.36" height="17.36" fill="#0b866b"/><rect x="220.28" y="84.6" width="17.36" height="17.36" fill="#31b264"/><rect x="237.24" y="84.6" width="17.36" height="17.36" fill="#0b866b"/><rect x="254.2" y="84.6" width="34.32" height="17.36" fill="#0d6b69"/><rect x="288.12" y="84.6" width="17.36" height="17.36" fill="#0b866b"/><rect x="305.08" y="84.6" width="17.36" height="17.36" fill="#31b264"/><rect x="322.04" y="84.6" width="17.36" height="17.36" fill="#0b866b"/><rect x="339" y="84.6" width="34.32" height="17.36" fill="#31b264"/><rect x="372.92" y="84.6" width="17.36" height="17.36" fill="#0b866b"/><rect x="389.88" y="84.6" width="34.32" height="17.36" fill="#0d6b69"/><rect x="423.8" y="84.6" width="17.36" height="17.36" fill="#0b866b"/><rect x="440.76" y="84.6" width="17.36" height="17.36" fill="#31b264"/><rect x="457.72" y="84.6" width="17.36" height="17.36" fill="#0b866b"/><rect x="474.68" y="84.6" width="17.36" height="17.36" fill="#31b264"/><rect x="491.64" y="84.6" width="34.32" height="17.36" fill="#0b866b"/><rect x="525.56" y="84.6" width="17.36" height="17.36" fill="#14555b"/><rect x="-0.2" y="101.56" width="17.36" height="17.36" fill="#14555b"/><rect x="16.76" y="101.56" width="17.36" height="17.36" fill="#0d6b69"/><rect x="33.72" y="101.56" width="68.24" height="17.36" fill="#0b866b"/><rect x="101.56" y="101.56" width="68.24" height="17.36" fill="#14555b"/><rect x="169.4" y="101.56" width="85.2" height="17.36" fill="#0b866b"/><rect x="254.2" y="101.56" width="34.32" height="17.36" fill="#14555b"/><rect x="288.12" y="101.56" width="17.36" height="17.36" fill="#0d6b69"/><rect x="305.08" y="101.56" width="68.24" height="17.36" fill="#0b866b"/><rect x="372.92" y="101.56" width="68.24" height="17.36" fill="#14555b"/><rect x="440.76" y="101.56" width="68.24" height="17.36" fill="#0b866b"/><rect x="508.6" y="101.56" width="17.36" height="17.36" fill="#0d6b69"/><rect x="525.56" y="101.56" width="17.36" height="17.36" fill="#14555b"/><rect x="16.76" y="118.52" width="17.36" height="17.36" fill="#14555b"/><rect x="33.72" y="118.52" width="51.28" height="17.36" fill="#0d6b69"/><rect x="84.6" y="118.52" width="17.36" height="17.36" fill="#14555b"/><rect x="101.56" y="118.52" width="68.24" height="17.36" fill="#3c6065"/><rect x="169.4" y="118.52" width="17.36" height="17.36" fill="#14555b"/><rect x="186.36" y="118.52" width="51.28" height="17.36" fill="#0d6b69"/><rect x="237.24" y="118.52" width="17.36" height="17.36" fill="#14555b"/><rect x="254.2" y="118.52" width="34.32" height="17.36" fill="#3c6065"/><rect x="288.12" y="118.52" width="17.36" height="17.36" fill="#14555b"/><rect x="305.08" y="118.52" width="68.24" height="17.36" fill="#0d6b69"/><rect x="372.92" y="118.52" width="68.24" height="17.36" fill="#3c6065"/><rect x="440.76" y="118.52" width="17.36" height="17.36" fill="#14555b"/><rect x="457.72" y="118.52" width="51.28" height="17.36" fill="#0d6b69"/><rect x="508.6" y="118.52" width="17.36" height="17.36" fill="#14555b"/><rect x="0.5" y="8.48" width="541.72" height="135.68" fill="none" stroke="#3a9fb4" stroke-width="1.1"/></svg>
<div style="left:1583.24px;top:949.7px;width:271.36px;height:1.6px;background:rgba(190,60,70,.55);"></div>
<div style="left:1854.6px;top:949.7px;width:271.36px;height:1.6px;background:rgba(150,110,150,.6);"></div>
<div style="left:1853.8px;top:874.18px;width:1.6px;height:76.32px;background:rgba(140,200,60,.6);"></div>
<div style="left:1853.8px;top:950.5px;width:1.6px;height:76.32px;background:rgba(170,190,190,.6);"></div>
<svg style="left:1838.6px;top:934.5px;width:32px;height:32px;" viewBox="0 0 32 32"><path d="M12 0h8v12h12v8H20v12h-8V20H0v-8h12z" fill="#bcd6c8"/><rect x="13.800" y="2.500" width="4.400" height="7" fill="#ee7468"/><rect x="13.800" y="22.500" width="4.400" height="7" fill="#ee7468"/><rect x="2.500" y="13.800" width="7" height="4.400" fill="#ee7468"/><rect x="22.500" y="13.800" width="7" height="4.400" fill="#ee7468"/><circle cx="16" cy="16" r="6.600" fill="#f47468"/></svg>
<svg style="left:1571.24px;top:862.18px;width:566.72px;height:176.64px;" viewBox="0 0 566.72 176.64"><circle cx="12" cy="21.08" r="9.300" fill="#222" fill-opacity=".45"/><circle cx="12" cy="20.48" r="8.200" fill="#ffffff"/><circle cx="12" cy="20.48" r="6.100" fill="#fc5f62"/><circle cx="12" cy="88.92" r="9.300" fill="#222" fill-opacity=".45"/><circle cx="12" cy="88.32" r="8.200" fill="#ffffff"/><circle cx="12" cy="88.32" r="6.100" fill="#fc5f62"/><circle cx="12" cy="156.76" r="9.300" fill="#222" fill-opacity=".45"/><circle cx="12" cy="156.16" r="8.200" fill="#ffffff"/><circle cx="12" cy="156.16" r="6.100" fill="#fc5f62"/><circle cx="283.36" cy="21.08" r="9.300" fill="#222" fill-opacity=".45"/><circle cx="283.36" cy="20.48" r="8.200" fill="#ffffff"/><circle cx="283.36" cy="20.48" r="6.100" fill="#fc5f62"/><circle cx="283.36" cy="156.76" r="9.300" fill="#222" fill-opacity=".45"/><circle cx="283.36" cy="156.16" r="8.200" fill="#ffffff"/><circle cx="283.36" cy="156.16" r="6.100" fill="#fc5f62"/><circle cx="554.72" cy="21.08" r="9.300" fill="#222" fill-opacity=".45"/><circle cx="554.72" cy="20.48" r="8.200" fill="#ffffff"/><circle cx="554.72" cy="20.48" r="6.100" fill="#fc5f62"/><circle cx="554.72" cy="88.92" r="9.300" fill="#222" fill-opacity=".45"/><circle cx="554.72" cy="88.32" r="8.200" fill="#ffffff"/><circle cx="554.72" cy="88.32" r="6.100" fill="#fc5f62"/><circle cx="554.72" cy="156.76" r="9.300" fill="#222" fill-opacity=".45"/><circle cx="554.72" cy="156.16" r="8.200" fill="#ffffff"/><circle cx="554.72" cy="156.16" r="6.100" fill="#fc5f62"/></svg>
<div style="left:565.2px;top:217px;width:2710px;height:1347.1px;border:4.3px solid rgba(124,192,250,.51);border-radius:6px;"></div>
<div style="left:3291px;top:87.2px;width:540px;height:2063.2px;background:#363d4a;border-radius:7px;"></div>
<div style="left:3291px;top:87.2px;width:540px;height:54.5px;background:#252b34;border-radius:7px 7px 0 0;"></div>
<div style="left:3291px;top:87.2px;width:167.8px;height:54.5px;background:#363d4a;border-radius:4px 0 0 0;"></div>
<div style="left:3291px;top:87.2px;width:167.8px;height:4px;background:#6a9ccb;border-radius:4px 0 0 0;"></div>
<span style="left:3313.5px;top:99.5px;font-size:29.3px;color:#cdcfd2;transform:scaleX(1.0165);">Inspector</span>
<span style="left:3482px;top:99.5px;font-size:29.3px;color:#6f757f;transform:scaleX(0.9851);">Node</span>
<span style="left:3597.5px;top:99.5px;font-size:29.3px;color:#6f757f;transform:scaleX(1.0147);">History</span>
<svg style="left:3798.8px;top:98.5px;width:32px;height:32px;" viewBox="0 0 16 16"><circle cx="8" cy="2.200" r="2.200" fill="#7c818c"/><circle cx="8" cy="8" r="2.200" fill="#7c818c"/><circle cx="8" cy="13.800" r="2.200" fill="#7c818c"/></svg>
<svg style="left:3311.2px;top:164.4px;width:32px;height:32px;" viewBox="0 0 16 16"><path d="M2 1v14h6.500v-2.500H7v-3h3V8h4V6H9V1z" fill="#e0e0e0"/><path d="M10 1v4h4z" fill="#e0e0e0"/><path d="M11 9.500h2v2h2v2h-2v2h-2v-2H9v-2h2z" fill="#5fff97"/></svg>
<svg style="left:3374.6px;top:164.4px;width:32px;height:32px;" viewBox="0 0 16 16"><path d="M1.500 2.500a1 1 0 0 1 1-1h3.500l1.500 1.500h4.500a1 1 0 0 1 1 1V5H5.500a1.500 1.500 0 0 0-1.400 1L2.500 11z" fill="none" stroke="#e0e0e0" stroke-width="1.300"/><path d="M5 6h10a.6.600 0 0 1 .6.800l-1.800 6.400a1 1 0 0 1-1 .8H2.500z" fill="#e0e0e0"/></svg>
<svg style="left:3438.7px;top:164.4px;width:32px;height:32px;opacity:0.4;" viewBox="0 0 16 16"><path fill-rule="evenodd" d="M2.500 1A1.500 1.500 0 0 0 1 2.500v11A1.500 1.500 0 0 0 2.500 15h11a1.500 1.500 0 0 0 1.500-1.500V4l-3-3zM4 2h2v3h3V2h2v4.500H4zM8 9a2 2 0 0 1 0 4 2 2 0 0 1 0-4z" fill="#e0e0e0"/></svg>
<svg style="left:3502.8px;top:164.4px;width:32px;height:32px;" viewBox="0 0 16 16"><circle cx="8" cy="2.200" r="2.200" fill="#e0e0e0"/><circle cx="8" cy="8" r="2.200" fill="#e0e0e0"/><circle cx="8" cy="13.800" r="2.200" fill="#e0e0e0"/></svg>
<svg style="left:3675.4px;top:164.4px;width:32px;height:32px;" viewBox="0 0 16 16"><path d="M10.300 1.800L5.900 8l4.400 6.200" fill="none" stroke="#e0e0e0" stroke-width="2.300" stroke-linejoin="miter" stroke-linecap="round"/></svg>
<svg style="left:3722.3px;top:164.4px;width:32px;height:32px;opacity:0.4;" viewBox="0 0 16 16"><path d="M5.700 1.800L10.100 8l-4.400 6.200" fill="none" stroke="#e0e0e0" stroke-width="2.300" stroke-linejoin="miter" stroke-linecap="round"/></svg>
<svg style="left:3779.7px;top:164.4px;width:32px;height:32px;" viewBox="0 0 16 16"><path d="M2.900 8A5.500 5.500 0 1 1 7.400 13.400" fill="none" stroke="#e0e0e0" stroke-width="2" stroke-linecap="butt"/><path d="M0.200 7h5.400L2.900 10.800z" fill="#e0e0e0"/><path d="M8.400 4.300V8.300h3.300" fill="none" stroke="#e0e0e0" stroke-width="2"/></svg>
<div style="left:3299.3px;top:214.3px;width:460px;height:58.5px;background:#242932;border-radius:7px;"></div>
<svg style="left:3306.8px;top:227.7px;width:32px;height:32px;" viewBox="0 0 16 16"><rect x="2" y="2" width="12" height="12" fill="none" stroke="#8da5f3" stroke-width="2" stroke-linejoin="round"/></svg>
<span style="left:3356px;top:229.3px;font-size:29.3px;color:#cdcfd2;transform:scaleX(0.9678);">CollisionShape2D</span>
<svg style="left:3719.6px;top:229px;width:30px;height:30px;" viewBox="0 0 16 16"><path d="M3.500 6l4.500 4.500L12.500 6" fill="none" stroke="#e0e0e0" stroke-width="2.200" stroke-linecap="round" stroke-linejoin="round"/></svg>
<svg style="left:3778.3px;top:227.7px;width:32px;height:32px;" viewBox="0 0 16 16"><circle cx="10" cy="3.700" r="2.700" fill="none" stroke="#e0e0e0" stroke-width="2"/><path d="M8 5.800L5.200 8.600" stroke="#e0e0e0" stroke-width="2.200" stroke-linecap="round"/><path fill-rule="evenodd" d="M.4 10h2.400a2.500 2.500 0 0 1 0 5H.4zM2.200 11.700v1.600h.5a.8.800 0 0 0 0-1.600z" fill="#e0e0e0"/><path fill-rule="evenodd" d="M8.300 9.900a2.600 2.600 0 0 1 0 5.200 2.600 2.600 0 0 1 0-5.200zm0 1.800a.8.800 0 0 0 0 1.600.8.800 0 0 0 0-1.600z" fill="#e0e0e0"/><path d="M15.700 11a2.600 2.600 0 1 0 0 3l-1.500-1a.8.800 0 1 1 0-1z" fill="#e0e0e0"/></svg>
<div style="left:3299.3px;top:281.4px;width:460px;height:56.6px;background:#242932;border-radius:6px 6px 0 0;border-bottom:3px solid #1e222a;"></div>
<span style="left:3312.3px;top:294.3px;font-size:29.3px;color:#8d9199;transform:scaleX(1.0059);">Filter Properties</span>
<svg style="left:3714.8px;top:293.6px;width:30px;height:30px;" viewBox="0 0 16 16"><circle cx="6.3" cy="6.3" r="4" fill="none" stroke="#e0e0e0" stroke-width="2"/><path d="M9.4 9.4l4.8 4.8" stroke="#e0e0e0" stroke-width="2.3" stroke-linecap="round"/></svg>
<svg style="left:3778.3px;top:292.6px;width:32px;height:32px;" viewBox="0 0 16 16"><ellipse cx="4.750" cy="2.700" rx="1.150" ry="1.550" fill="#e0e0e0"/><rect x="4.200" y="3" width="1.100" height="6.500" fill="#e0e0e0"/><path d="M2.200 9.200h5.100v3.300a2.550 2.550 0 0 1-5.100 0z" fill="#e0e0e0"/><path d="M9.700 1.500a3 3 0 0 0 .650 5v8.500h2.050V6.500a3 3 0 0 0 .650-5l0 2.600-.8.800h-1.750l-.8-.8z" fill="#e0e0e0"/></svg>
<div style="left:3299.3px;top:346.6px;width:523.7px;height:1795.2px;background:#21262e;border-radius:6px;"></div>
<div style="left:3307px;top:354px;width:507.8px;height:46.7px;background:#3d434e;border-radius:7px;"></div>
<svg style="left:3417.9px;top:361px;width:32px;height:32px;" viewBox="0 0 16 16"><rect x="2" y="2" width="12" height="12" fill="none" stroke="#8da5f3" stroke-width="2" stroke-linejoin="round"/></svg>
<span style="left:3463.3px;top:361.2px;font-size:29.3px;color:#d2d4d8;font-weight:700;transform:scaleX(0.9607);">CollisionShape2D</span>
<span style="left:3323.5px;top:414.5px;font-size:29.3px;color:#a3a6ab;transform:scaleX(0.9443);">Shape</span>
<svg style="left:3523.7px;top:414px;width:32px;height:32px;" viewBox="0 0 16 16"><path d="M4.300 11.700A5.200 5.200 0 1 0 3 7" fill="none" stroke="#e0e0e0" stroke-width="1.900" stroke-linecap="round"/><path d="M0.400 5.300h5.600L3.200 9.500z" fill="#e0e0e0"/></svg>
<svg style="left:3573px;top:414.5px;width:32px;height:32px;" viewBox="0 0 16 16"><rect x="2" y="4" width="12" height="8.500" rx="1" fill="none" stroke="#68b6ff" stroke-width="2"/></svg>
<span style="left:3614.2px;top:416.3px;font-size:29.3px;color:#cdcfd2;transform:scaleX(0.9612);">Rectangle</span>
<svg style="left:3772.7px;top:416px;width:32px;height:32px;" viewBox="0 0 16 16"><path d="M4.400 6.200L8 9.800l3.600-3.600" fill="none" stroke="#b4b7bc" stroke-width="2.200" stroke-linejoin="round"/></svg>
<span style="left:3323.5px;top:479.3px;font-size:29.3px;color:#a3a6ab;transform:scaleX(0.9825);">Disabled</span>
<div style="left:3562px;top:465.5px;width:252.8px;height:60.5px;background:#1f242b;border-radius:4px;"></div>
<div style="left:3571px;top:481px;width:28px;height:28px;background:#3f4550;border-radius:5px;"></div>
<span style="left:3618px;top:481.3px;font-size:29.3px;color:#cdcfd2;transform:scaleX(0.9464);">On</span>
<span style="left:3323.5px;top:542.3px;font-size:29.3px;color:#a3a6ab;transform:scaleX(0.9581);">One Way Collisi...</span>
<div style="left:3562px;top:529px;width:252.8px;height:59px;background:#1f242b;border-radius:4px;"></div>
<div style="left:3571px;top:544.5px;width:28px;height:28px;background:#3f4550;border-radius:5px;"></div>
<span style="left:3618px;top:544.8px;font-size:29.3px;color:#cdcfd2;transform:scaleX(0.9464);">On</span>
<span style="left:3323.5px;top:605.8px;font-size:29.3px;color:#a3a6ab;transform:scaleX(0.9581);">One Way Collisi...</span>
<div style="left:3562px;top:592.5px;width:252.8px;height:59px;background:#1f242b;border-radius:4px;"></div>
<span style="left:3595px;top:606.8px;font-size:29.3px;color:#cdcfd2;transform:scaleX(1.08);">1</span>
<span style="left:3621.7px;top:606.8px;font-size:29.3px;color:#6f747c;transform:scaleX(0.9789);">px</span>
<div style="left:3573.2px;top:641.6px;width:221.8px;height:3px;background:#3a3f49;border-radius:1px;"></div>
<div style="left:3573.2px;top:639.5px;width:8.8px;height:9px;background:#d0d2d5;border-radius:1px;"></div>
<span style="left:3323.5px;top:670.2px;font-size:29.3px;color:#a3a6ab;transform:scaleX(0.994);">Debug Color</span>
<svg style="left:3573.2px;top:669px;width:230px;height:35.4px;shape-rendering:crispEdges;" viewBox="0 0 230 35.4"><rect width="230" height="35.400" fill="#98dce3"/><rect x="0" y="0" width="16" height="16" fill="#478f98"/><rect x="32" y="0" width="16" height="16" fill="#478f98"/><rect x="64" y="0" width="16" height="16" fill="#478f98"/><rect x="96" y="0" width="16" height="16" fill="#478f98"/><rect x="128" y="0" width="16" height="16" fill="#478f98"/><rect x="160" y="0" width="16" height="16" fill="#478f98"/><rect x="192" y="0" width="16" height="16" fill="#478f98"/><rect x="224" y="0" width="16" height="16" fill="#478f98"/><rect x="16" y="16" width="16" height="16" fill="#478f98"/><rect x="48" y="16" width="16" height="16" fill="#478f98"/><rect x="80" y="16" width="16" height="16" fill="#478f98"/><rect x="112" y="16" width="16" height="16" fill="#478f98"/><rect x="144" y="16" width="16" height="16" fill="#478f98"/><rect x="176" y="16" width="16" height="16" fill="#478f98"/><rect x="208" y="16" width="16" height="16" fill="#478f98"/><rect x="0" y="32" width="16" height="16" fill="#478f98"/><rect x="32" y="32" width="16" height="16" fill="#478f98"/><rect x="64" y="32" width="16" height="16" fill="#478f98"/><rect x="96" y="32" width="16" height="16" fill="#478f98"/><rect x="128" y="32" width="16" height="16" fill="#478f98"/><rect x="160" y="32" width="16" height="16" fill="#478f98"/><rect x="192" y="32" width="16" height="16" fill="#478f98"/><rect x="224" y="32" width="16" height="16" fill="#478f98"/></svg>
<div style="left:3307px;top:715.2px;width:507.8px;height:46.7px;background:#3d434e;border-radius:7px;"></div>
<svg style="left:3482.7px;top:722.2px;width:32px;height:32px;" viewBox="0 0 16 16"><circle cx="8" cy="8" r="5" fill="none" stroke="#8da5f3" stroke-width="2"/></svg>
<span style="left:3527.8px;top:722.4px;font-size:29.3px;color:#d2d4d8;font-weight:700;transform:scaleX(0.99);">Node2D</span>
<div style="left:3307px;top:762.2px;width:507.8px;height:47.2px;background:#262b34;"></div>
<svg style="left:3307.5px;top:768.5px;width:32px;height:32px;" viewBox="0 0 16 16"><path d="M6.200 4.400L9.800 8l-3.600 3.600" fill="none" stroke="#8a8e95" stroke-width="2.200" stroke-linejoin="round"/></svg>
<span style="left:3335.5px;top:767.8px;font-size:29.3px;color:#d2d4d8;font-weight:700;">Transform</span>
<div style="left:3307px;top:809px;width:507.8px;height:46.7px;background:#3d434e;border-radius:7px;"></div>
<svg style="left:3455.5px;top:816px;width:32px;height:32px;" viewBox="0 0 16 16"><path d="M14 1.300a1.200 1.200 0 0 1 .8 2L8.500 10 6.300 7.800l6.800-6.200a1.200 1.200 0 0 1 .9-.3z" fill="#8d9096"/><path d="M5.500 8.700L7.600 10.800C7.400 13.200 5 14.800 1.200 14.300 2.800 13.200 2.500 12 3 10.500 3.500 9.300 4.500 8.800 5.500 8.700z" fill="#8d9096"/></svg>
<span style="left:3499.8px;top:816.2px;font-size:29.3px;color:#d2d4d8;font-weight:700;transform:scaleX(1.0087);">CanvasItem</span>
<div style="left:3307px;top:856.2px;width:507.8px;height:47.2px;background:#262b34;"></div>
<svg style="left:3307.5px;top:862.5px;width:32px;height:32px;" viewBox="0 0 16 16"><path d="M6.200 4.400L9.800 8l-3.600 3.600" fill="none" stroke="#8a8e95" stroke-width="2.200" stroke-linejoin="round"/></svg>
<span style="left:3335.5px;top:861.8px;font-size:29.3px;color:#d2d4d8;font-weight:700;transform:scaleX(1.0171);">Visibility</span>
<div style="left:3307px;top:903.2px;width:507.8px;height:47.2px;background:#262b34;"></div>
<svg style="left:3307.5px;top:909.5px;width:32px;height:32px;" viewBox="0 0 16 16"><path d="M6.200 4.400L9.800 8l-3.600 3.600" fill="none" stroke="#8a8e95" stroke-width="2.200" stroke-linejoin="round"/></svg>
<span style="left:3335.5px;top:908.8px;font-size:29.3px;color:#d2d4d8;font-weight:700;transform:scaleX(1.0104);">Ordering</span>
<div style="left:3307px;top:950.5px;width:507.8px;height:47.2px;background:#262b34;"></div>
<svg style="left:3307.5px;top:956.8px;width:32px;height:32px;" viewBox="0 0 16 16"><path d="M6.200 4.400L9.800 8l-3.600 3.600" fill="none" stroke="#8a8e95" stroke-width="2.200" stroke-linejoin="round"/></svg>
<span style="left:3335.5px;top:956.1px;font-size:29.3px;color:#d2d4d8;font-weight:700;transform:scaleX(0.9966);">Texture</span>
<div style="left:3307px;top:997.2px;width:507.8px;height:47.2px;background:#262b34;"></div>
<svg style="left:3307.5px;top:1003.5px;width:32px;height:32px;" viewBox="0 0 16 16"><path d="M6.200 4.400L9.800 8l-3.600 3.600" fill="none" stroke="#8a8e95" stroke-width="2.200" stroke-linejoin="round"/></svg>
<span style="left:3335.5px;top:1002.8px;font-size:29.3px;color:#d2d4d8;font-weight:700;transform:scaleX(1.0674);">Material</span>
<div style="left:3307px;top:1044.3px;width:507.8px;height:46.7px;background:#3d434e;border-radius:7px;"></div>
<svg style="left:3500.6px;top:1051.3px;width:32px;height:32px;" viewBox="0 0 16 16"><circle cx="8" cy="8" r="5" fill="none" stroke="#e0e0e0" stroke-width="2"/></svg>
<span style="left:3546px;top:1051.5px;font-size:29.3px;color:#d2d4d8;font-weight:700;transform:scaleX(0.9925);">Node</span>
<div style="left:3307px;top:1091px;width:507.8px;height:47.2px;background:#262b34;"></div>
<svg style="left:3307.5px;top:1097.3px;width:32px;height:32px;" viewBox="0 0 16 16"><path d="M6.200 4.400L9.800 8l-3.600 3.600" fill="none" stroke="#8a8e95" stroke-width="2.200" stroke-linejoin="round"/></svg>
<span style="left:3335.5px;top:1096.6px;font-size:29.3px;color:#d2d4d8;font-weight:700;transform:scaleX(0.9165);">Process</span>
<div style="left:3307px;top:1138.2px;width:507.8px;height:47.2px;background:#262b34;"></div>
<svg style="left:3307.5px;top:1144.5px;width:32px;height:32px;" viewBox="0 0 16 16"><path d="M6.200 4.400L9.800 8l-3.600 3.600" fill="none" stroke="#8a8e95" stroke-width="2.200" stroke-linejoin="round"/></svg>
<span style="left:3335.5px;top:1143.8px;font-size:29.3px;color:#d2d4d8;font-weight:700;transform:scaleX(0.9963);">Editor Description</span>
<span style="left:3323.5px;top:1198.2px;font-size:29.3px;color:#a3a6ab;transform:scaleX(0.9814);">Script</span>
<span style="left:3605px;top:1200.3px;font-size:29.3px;color:#cdcfd2;transform:scaleX(0.9965);">&lt;empty&gt;</span>
<svg style="left:3772.7px;top:1200px;width:32px;height:32px;" viewBox="0 0 16 16"><path d="M4.400 6.200L8 9.800l3.600-3.600" fill="none" stroke="#b4b7bc" stroke-width="2.200" stroke-linejoin="round"/></svg>
<div style="left:3382px;top:1252.2px;width:357px;height:58.1px;background:#2c323c;border-radius:7px;"></div>
<svg style="left:3395px;top:1266.5px;width:30px;height:30px;" viewBox="0 0 16 16"><path d="M7 1v6H1v2h6v6h2V9h6V7H9V1z" fill="#e0e0e0"/></svg>
<span style="left:3490px;top:1267.3px;font-size:29.3px;color:#cdcfd2;transform:scaleX(1.0081);">Add Metadata</span>
<div style="left:565.2px;top:1580px;width:2710px;height:570.4px;background:#363d4a;border-radius:7px;"></div>
<div style="left:572.9px;top:1591.6px;width:2565.4px;height:418.6px;background:#21262e;border-radius:6px;"></div>
<span class="m" style="left:582.2px;top:1572.12px;font-size:27.4px;color:#92979e;transform:scaleX(0.9649);">Create Node</span>
<span class="m" style="left:582.2px;top:1603.14px;font-size:27.4px;color:#92979e;transform:scaleX(0.9649);">Create Node</span>
<span class="m" style="left:582.2px;top:1634.16px;font-size:27.4px;color:#92979e;transform:scaleX(0.9649);">Set texture</span>
<span class="m" style="left:582.2px;top:1665.18px;font-size:27.4px;color:#92979e;transform:scaleX(0.9649);">Set region_enabled</span>
<span class="m" style="left:582.2px;top:1696.2px;font-size:27.4px;color:#92979e;transform:scaleX(0.9649);">Set Region Rect</span>
<span class="m" style="left:582.2px;top:1727.22px;font-size:27.4px;color:#92979e;transform:scaleX(0.9649);">Set Region Rect</span>
<span class="m" style="left:582.2px;top:1758.24px;font-size:27.4px;color:#92979e;transform:scaleX(0.9649);">Set Region Rect</span>
<span class="m" style="left:582.2px;top:1789.26px;font-size:27.4px;color:#92979e;transform:scaleX(0.9649);">Create Node</span>
<span class="m" style="left:582.2px;top:1820.28px;font-size:27.4px;color:#92979e;transform:scaleX(0.9649);">Set shape</span>
<span class="m" style="left:582.2px;top:1851.3px;font-size:27.4px;color:#92979e;transform:scaleX(0.9649);">Set Handle</span>
<span class="m" style="left:582.2px;top:1882.32px;font-size:27.4px;color:#92979e;transform:scaleX(0.9649);">Set Handle</span>
<span class="m" style="left:582.2px;top:1913.34px;font-size:27.4px;color:#92979e;transform:scaleX(0.9649);">Set Handle</span>
<span class="m" style="left:582.2px;top:1944.36px;font-size:27.4px;color:#92979e;transform:scaleX(0.9649);">Set Handle</span>
<span class="m" style="left:582.2px;top:1975.38px;font-size:27.4px;color:#92979e;transform:scaleX(0.9649);">Set Handle</span>
<div style="left:565.2px;top:1564.1px;width:2710px;height:15.9px;background:#1d2229;"></div>
<div style="left:574px;top:1580px;width:2563px;height:11.6px;background:#363d4a;"></div>
<div style="left:3121.5px;top:1599.6px;width:11.2px;height:404.3px;background:#2b3039;border-radius:5px;"></div>
<div style="left:3121.5px;top:1626px;width:11.2px;height:377.9px;background:#6a6f78;border-radius:5px;"></div>
<svg style="left:3159px;top:1601.9px;width:32px;height:32px;" viewBox="0 0 16 16"><path d="M7.300 1.200h1.400v5.300h2a1.500 1.500 0 0 1 1.500 1.500v1H3.800V8a1.500 1.500 0 0 1 1.500-1.500h2z" fill="#e0e0e0"/><path d="M3.800 10h8.400v4l-8.400 1z" fill="#e0e0e0"/></svg>
<svg style="left:3223px;top:1601.9px;width:32px;height:32px;" viewBox="0 0 16 16"><path d="M1.500 1.500h8a1 1 0 0 1 1 1v1h-2v-0.300h-5.200v5.300h0.700v2h-1.500a1 1 0 0 1-1-1z" fill="#e0e0e0"/><path fill-rule="evenodd" d="M5 4.500h9a.5.500 0 0 1 .5.500v9a.5.500 0 0 1-.5.500H5a.5.500 0 0 1-.5-.5V5a.5.500 0 0 1 .5-.5zM6.300 6.300v6.400h6.400V6.300z" fill="#e0e0e0"/></svg>
<div style="left:3146px;top:1653px;width:122px;height:1.6px;background:#4a515d;"></div>
<svg style="left:3159px;top:1674px;width:32px;height:32px;" viewBox="0 0 16 16"><path d="M1 1.500h14v1.800H1zM8 6h7v1.800H8zM8 10.500h7v1.800H8z" fill="#e0e0e0"/><path d="M4 4.500L1 8.500h2.100V13h1.800V8.500H7z" fill="#e0e0e0"/></svg>
<div style="left:3211px;top:1663.9px;width:56px;height:51.8px;background:#1f242c;border-radius:6px;"></div>
<svg style="left:3224px;top:1675px;width:30px;height:30px;" viewBox="0 0 16 16"><circle cx="6.3" cy="6.3" r="4" fill="none" stroke="#70bafa" stroke-width="2"/><path d="M9.4 9.4l4.8 4.8" stroke="#70bafa" stroke-width="2.3" stroke-linecap="round"/></svg>
<div style="left:3146px;top:1725.2px;width:122px;height:1.6px;background:#4a515d;"></div>
<div style="left:3147.2px;top:1736.3px;width:119.7px;height:58.1px;background:#70bafa;border-radius:7px;"></div>
<div style="left:3147.2px;top:1736.3px;width:119.7px;height:54.6px;background:#1f242c;border-radius:7px 7px 6px 6px;"></div>
<svg style="left:3159.8px;top:1750px;width:30px;height:30px;" viewBox="0 0 16 16"><path fill-rule="evenodd" d="M2.500 1A1.500 1.500 0 0 0 1 2.500v11A1.500 1.500 0 0 0 2.500 15h11a1.500 1.500 0 0 0 1.500-1.500v-11A1.500 1.500 0 0 0 13.500 1zM7 3h2v6.500H7zM7 11h2v2H7z" fill="#e0e0e0"/></svg>
<span style="left:3217.95px;top:1751.32px;font-size:28.8px;color:#6aaee9;transform:scaleX(1.08);">0</span>
<div style="left:3147.2px;top:1803.4px;width:119.7px;height:58.1px;background:#70bafa;border-radius:7px;"></div>
<div style="left:3147.2px;top:1803.4px;width:119.7px;height:54.6px;background:#1f242c;border-radius:7px 7px 6px 6px;"></div>
<svg style="left:3159.8px;top:1817.1px;width:30px;height:30px;" viewBox="0 0 16 16"><circle cx="8" cy="8" r="7.200" fill="#ff5f5f"/><path d="M5 5l6 6M11 5l-6 6" stroke="#2a1d24" stroke-width="2"/></svg>
<span style="left:3217.95px;top:1818.42px;font-size:28.8px;color:#6aaee9;transform:scaleX(1.08);">0</span>
<div style="left:3147.2px;top:1870.5px;width:119.7px;height:58.1px;background:#70bafa;border-radius:7px;"></div>
<div style="left:3147.2px;top:1870.5px;width:119.7px;height:54.6px;background:#1f242c;border-radius:7px 7px 6px 6px;"></div>
<svg style="left:3159.8px;top:1884.2px;width:30px;height:30px;" viewBox="0 0 16 16"><circle cx="8" cy="8" r="7.200" fill="#ffdd65"/><path d="M7 3h2v6.500H7zM7 11h2v2H7z" fill="#3a3320"/></svg>
<span style="left:3217.95px;top:1885.52px;font-size:28.8px;color:#6aaee9;transform:scaleX(1.08);">0</span>
<div style="left:3147.2px;top:1937.6px;width:119.7px;height:58.1px;background:#70bafa;border-radius:7px;"></div>
<div style="left:3147.2px;top:1937.6px;width:119.7px;height:54.6px;background:#1f242c;border-radius:7px 7px 6px 6px;"></div>
<svg style="left:3159.8px;top:1951.3px;width:30px;height:30px;" viewBox="0 0 16 16"><path d="M6.200 1.500h3.600v2H6.200z" fill="#e0e0e0"/><path fill-rule="evenodd" d="M6.200 4.500h3.600v7L8 15l-1.800-3.500zM7.500 5.800v5.400h1V5.800z" fill="#e0e0e0"/></svg>
<span style="left:3209.3px;top:1952.62px;font-size:28.8px;color:#6aaee9;transform:scaleX(1.08);">14</span>
<div style="left:572.9px;top:2019.5px;width:2565.4px;height:56px;background:#262b34;border-radius:5px 5px 0 0;border-bottom:3px solid #1b1f26;"></div>
<span style="left:585.9px;top:2032.9px;font-size:29.3px;color:#a9acb1;transform:scaleX(0.9754);">Filter Messages</span>
<svg style="left:3095.3px;top:2031px;width:30px;height:30px;" viewBox="0 0 16 16"><circle cx="6.3" cy="6.3" r="4" fill="none" stroke="#e0e0e0" stroke-width="2"/><path d="M9.4 9.4l4.8 4.8" stroke="#e0e0e0" stroke-width="2.3" stroke-linecap="round"/></svg>
<span style="left:585.9px;top:2099.5px;font-size:29.3px;color:#6fb3ef;transform:scaleX(1.0426);">Output</span>
<span style="left:711.1px;top:2099.5px;font-size:29.3px;color:#cdcfd2;transform:scaleX(1.011);">Debugger</span>
<span style="left:874.8px;top:2099.5px;font-size:29.3px;color:#cdcfd2;transform:scaleX(0.9393);">Search Results</span>
<span style="left:1094.2px;top:2099.5px;font-size:29.3px;color:#cdcfd2;transform:scaleX(0.9942);">Audio</span>
<span style="left:1202.3px;top:2099.5px;font-size:29.3px;color:#cdcfd2;transform:scaleX(1.0293);">Animation</span>
<span style="left:1369.2px;top:2099.5px;font-size:29.3px;color:#cdcfd2;transform:scaleX(0.9924);">Shader Editor</span>
<svg style="left:2992.6px;top:2096px;width:32px;height:32px;opacity:0.22;" viewBox="0 0 16 16"><path d="M11 2.500c-3 .2-5.500 2.300-6.300 5.300L2 10l6.500 4.500 1-3.200c2-.8 3.500-2.800 3.500-5.300z" fill="#e0e0e0"/><circle cx="10.500" cy="13.500" r="1.500" fill="#e0e0e0"/></svg>
<span style="left:3044px;top:2099px;font-size:29.3px;color:#878b93;transform:scaleX(0.9889);">4.2.1.stable</span>
<svg style="left:3222.9px;top:2096px;width:32px;height:32px;" viewBox="0 0 16 16"><path d="M1 1.500h14v1.800H1z" fill="#e0e0e0"/><path d="M4.500 5L1.500 9h2.100v5.500h1.800V9h2.100zM11.500 5l-3 4h2.100v5.500h1.800V9h2.100z" fill="#e0e0e0"/></svg>
<svg style="left:3742px;top:2061.9px;width:64px;height:64px;" viewBox="-32 -32 64 64"><defs><linearGradient id="lg1" gradientUnits="userSpaceOnUse" x1="0" y1="-30" x2="0" y2="30"><stop offset="0" stop-color="#dcae34"/><stop offset=".17" stop-color="#c47a3c"/><stop offset=".37" stop-color="#b2354b"/><stop offset=".5" stop-color="#98325a"/><stop offset=".63" stop-color="#7a3080"/><stop offset=".75" stop-color="#592d94"/><stop offset=".88" stop-color="#4030b0"/><stop offset="1" stop-color="#3a3ad8"/></linearGradient></defs><path fill-rule="evenodd" d="M0-30L30 0 0 30-30 0zM0-14.300L-14.300 0 0 14.300 14.300 0z" fill="url(#lg1)"/><path d="M-22-22L22 22" stroke="#20252d" stroke-width="4.300"/></svg>
<svg style="left:152.1px;top:355.6px;width:24px;height:36px;" viewBox="0 0 24 36"><path d="M1.500 1.500v27.500l6.300-5.800 4.300 9.700 4-1.800-4.300-9.500h8.700z" fill="#ffffff" stroke="#151515" stroke-width="1.700" stroke-linejoin="round"/></svg>
<div style="left:0px;top:0px;width:1.3px;height:2160px;background:#3f4650;"></div>
<div style="left:3838.7px;top:0px;width:1.3px;height:2160px;background:#3f4650;"></div>
<div style="left:0px;top:2158.7px;width:3840px;height:1.3px;background:#3f4650;"></div>
</body></html>
